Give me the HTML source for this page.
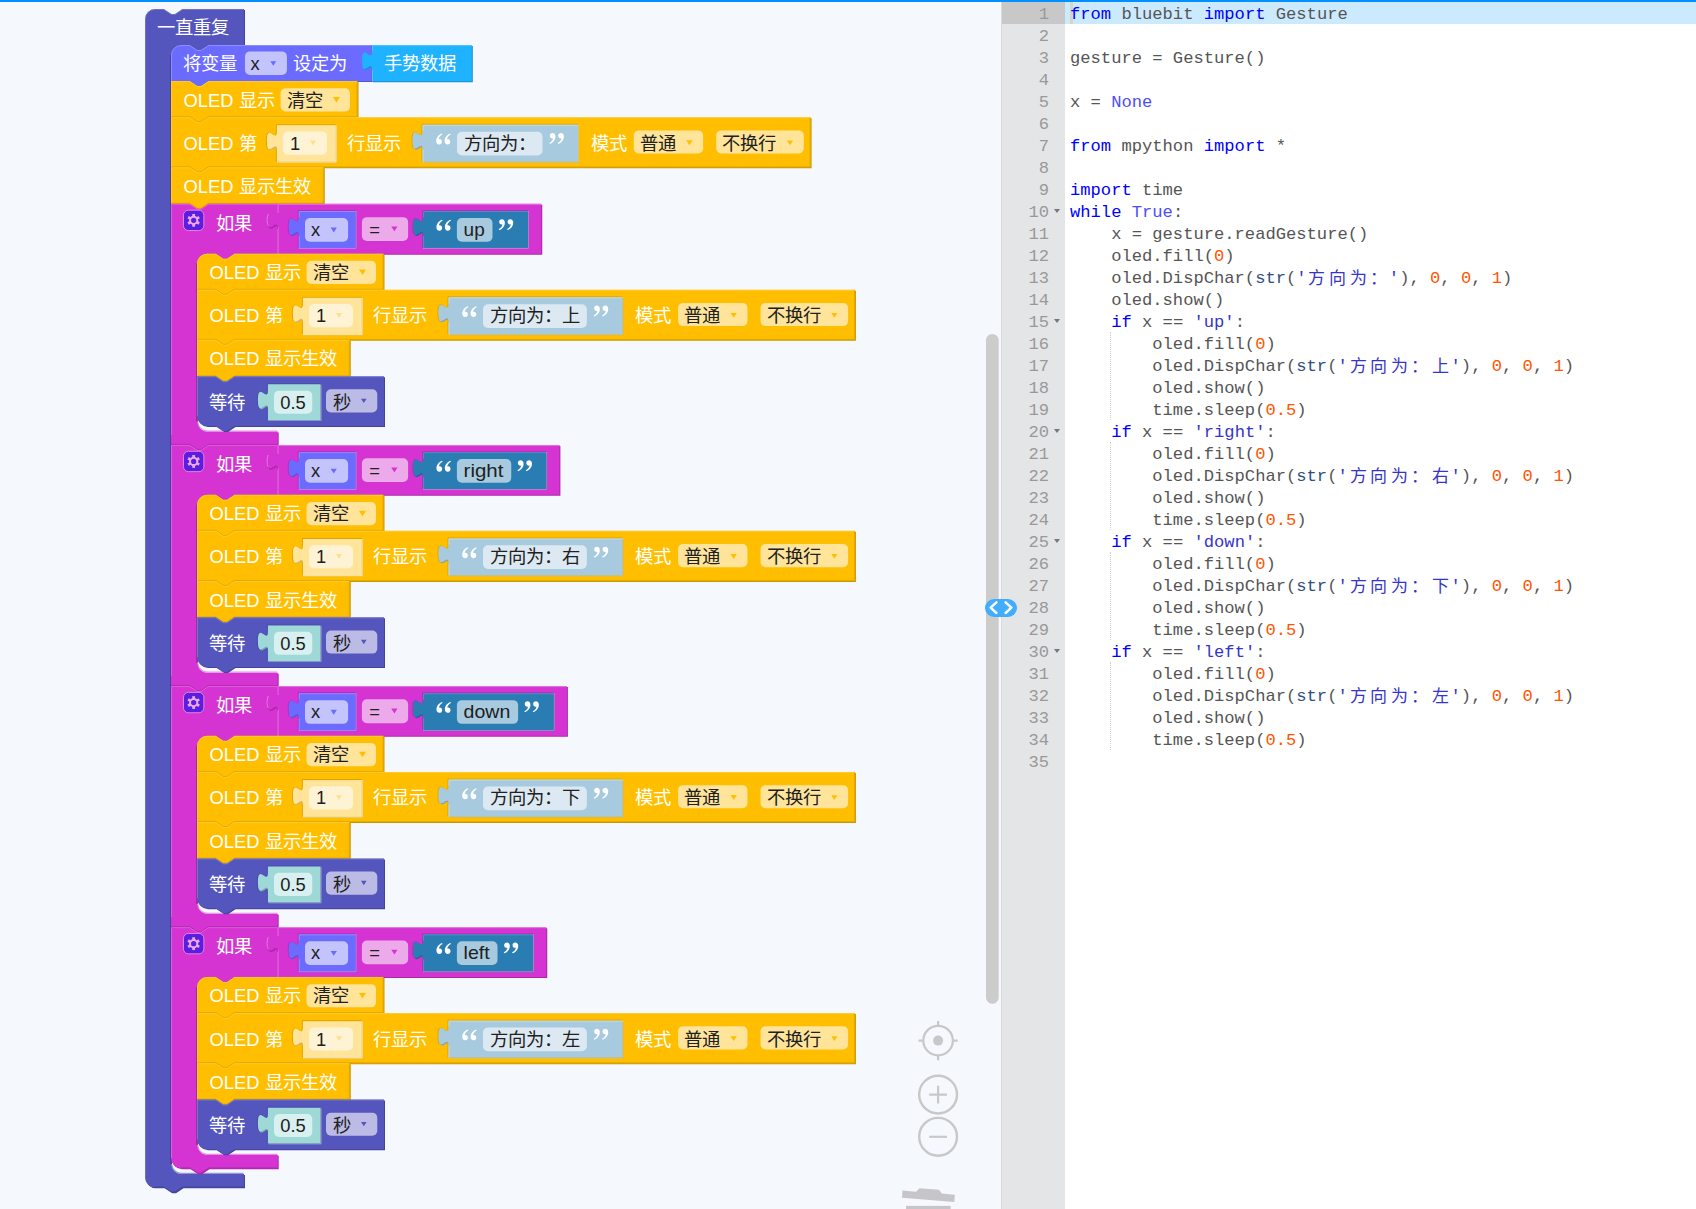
<!DOCTYPE html>
<html lang="zh-CN"><head><meta charset="utf-8">
<style>
html,body{margin:0;padding:0;width:1696px;height:1209px;overflow:hidden;background:#f5f8fd;}
#ws{position:absolute;left:0;top:0;width:1001px;height:1209px;background:#f5f8fd;}
#topbar{position:absolute;left:0;top:0;width:1696px;height:2px;background:#0090ff;z-index:10;}
#gutter{position:absolute;left:1001px;top:0;width:64px;height:1209px;background:#e4e5e7;border-left:1px solid #d8d9db;box-sizing:border-box;}
#code{position:absolute;left:1065px;top:0;width:631px;height:1209px;background:#fff;}
.ln{position:absolute;left:5px;height:22px;line-height:26px;white-space:pre;font-family:"Liberation Mono",monospace;font-size:17.15px;color:#555555;}
.gn{position:absolute;right:16px;width:40px;text-align:right;height:22px;line-height:26px;font-family:"Liberation Mono",monospace;font-size:17.15px;color:#999;}
.cj{display:inline-block;width:20.57px;text-align:center;font-family:"Liberation Serif",serif;font-size:17px;font-weight:300;line-height:26px;vertical-align:top;}
.fold{position:absolute;left:52px;width:0;height:0;border-left:3.5px solid transparent;border-right:3.5px solid transparent;border-top:4px solid #777;}
.guide{position:absolute;left:45px;width:0;border-left:1px dotted #cfcfcf;}
svg text{font-family:"Liberation Sans",sans-serif;}
</style></head><body>
<div id="ws">
<svg width="1001" height="1209" viewBox="0 0 1001 1209" style="position:absolute;left:0;top:0">
<path d="M145,19 A10.0,10.0 0 0 1 155,9 H163.75 l7.5,5.0 3.75,0 7.5,-5.0 H244 V45 H208.5 l-7.5,5.0 -3.75,0 -7.5,-5.0 H181 A10.0,10.0 0 0 0 171,55 V1163.95 A10.0,10.0 0 0 0 181,1173.95 H244 V1187.35 H182.5 l-7.5,5.0 -3.75,0 -7.5,-5.0 H155 A10.0,10.0 0 0 1 145,1177.35 Z" fill="#434498" transform="translate(1,1)"/>
<path d="M145,19 A10.0,10.0 0 0 1 155,9 H163.75 l7.5,5.0 3.75,0 7.5,-5.0 H244 V45 H208.5 l-7.5,5.0 -3.75,0 -7.5,-5.0 H181 A10.0,10.0 0 0 0 171,55 V1163.95 A10.0,10.0 0 0 0 181,1173.95 H244 V1187.35 H182.5 l-7.5,5.0 -3.75,0 -7.5,-5.0 H155 A10.0,10.0 0 0 1 145,1177.35 Z" fill="#5456be"/>
<path d="M145.5,1177.35 V19 A9.5,9.5 0 0 1 155,9.5 H163.75 l7.5,5.0 3.75,0 7.5,-5.0 H243.5" fill="none" stroke="#8a8cd6" stroke-width="1" opacity="0.5"/>
<path d="M170.5,55 V1163.95" stroke="#3a3c85" stroke-width="1" opacity="0.7"/>
<path d="M155,1186.85 H163.75 l7.5,5.0 3.75,0 7.5,-5.0 H243.5" fill="none" stroke="#3f408e" stroke-width="1" opacity="0.6"/>
<path d="M171.5,1163.95 A10.0,10.0 0 0 0 181,1173.45 H243.5" fill="none" stroke="#8a8cd6" stroke-width="1.2" opacity="0.9"/>
<text x="156.5" y="34" font-size="18.33" fill="#fff">一直重复</text>
<path d="M171,55 A10.0,10.0 0 0 1 181,45 H189.75 l7.5,5.0 3.75,0 7.5,-5.0 H371.85 V81.1 H208.5 l-7.5,5.0 -3.75,0 -7.5,-5.0 H171 Z" fill="#5555cc" transform="translate(1,1)"/>
<path d="M171,55 A10.0,10.0 0 0 1 181,45 H189.75 l7.5,5.0 3.75,0 7.5,-5.0 H371.85 V81.1 H208.5 l-7.5,5.0 -3.75,0 -7.5,-5.0 H171 Z" fill="#6b6bff"/>
<path d="M171.5,81.1 V55 A9.5,9.5 0 0 1 181,45.5 H189.75 l7.5,5.0 3.75,0 7.5,-5.0 H371.35" fill="none" stroke="#a3a3ff" stroke-width="1" opacity="0.6"/>
<text x="182.8" y="70.45" font-size="18.33" fill="#fff">将变量</text>
<rect x="245" y="51.4" width="41.9" height="23.5" rx="5" fill="#c4c4fd"/>
<text x="250.6" y="70.45" font-size="18.33" fill="#202020">x</text>
<path d="M270.3,61.18 H276.25 L273.27,65.82 Z" fill="#6b6bff"/>
<text x="292.8" y="70.45" font-size="18.33" fill="#fff">设定为</text>
<path d="M372,45.1 H471.8 V81.2 H372 V70.1 c 0,-12.5 -10,10 -10,-9.375 s 10,3.125 10,-9.375 Z" fill="#188fcc" transform="translate(1,1)"/>
<path d="M372,45.1 H471.8 V81.2 H372 V70.1 c 0,-12.5 -10,10 -10,-9.375 s 10,3.125 10,-9.375 Z" fill="#1fb3ff"/>
<path d="M372.5,81.2 V70.1 M372.5,51.35 V45.6 H471.8" fill="none" stroke="#6fd0ff" stroke-width="1" opacity="0.6"/>
<text x="383.9" y="70.45" font-size="18.33" fill="#fff">手势数据</text>
<path d="M171,81.1 H189.75 l7.5,5.0 3.75,0 7.5,-5.0 H357.5 V117.2 H208.5 l-7.5,5.0 -3.75,0 -7.5,-5.0 H171 Z" fill="#cc9800" transform="translate(1,1)"/>
<path d="M171,81.1 H189.75 l7.5,5.0 3.75,0 7.5,-5.0 H357.5 V117.2 H208.5 l-7.5,5.0 -3.75,0 -7.5,-5.0 H171 Z" fill="#ffbf00"/>
<path d="M171,116.7 H189.75 l7.5,5.0 3.75,0 7.5,-5.0 H357 V81.1" fill="none" stroke="#cc9900" stroke-width="1" opacity="0.55"/>
<path d="M171.5,117.2 V81.6 H189.75 l7.5,5.0 3.75,0 7.5,-5.0 H357" fill="none" stroke="#ffd24d" stroke-width="1" opacity="0.6"/>
<text x="183.6" y="106.55" font-size="18.33" fill="#fff">OLED 显示</text>
<rect x="280.6" y="88.3" width="69.4" height="23.2" rx="5" fill="#ffe49a"/>
<text x="286.9" y="106.55" font-size="18.33" fill="#202020">清空</text>
<path d="M333,97.07 H340 L336.5,102.53 Z" fill="#ffbf00"/>
<path d="M171,117.2 H189.75 l7.5,5.0 3.75,0 7.5,-5.0 H810.6 V167.3 H208.5 l-7.5,5.0 -3.75,0 -7.5,-5.0 H171 Z" fill="#cc9800" transform="translate(1,1)"/>
<path d="M171,117.2 H189.75 l7.5,5.0 3.75,0 7.5,-5.0 H810.6 V167.3 H208.5 l-7.5,5.0 -3.75,0 -7.5,-5.0 H171 Z" fill="#ffbf00"/>
<path d="M171,166.8 H189.75 l7.5,5.0 3.75,0 7.5,-5.0 H810.1 V117.2" fill="none" stroke="#cc9900" stroke-width="1" opacity="0.55"/>
<path d="M171.5,167.3 V117.7 H189.75 l7.5,5.0 3.75,0 7.5,-5.0 H810.1" fill="none" stroke="#ffd24d" stroke-width="1" opacity="0.6"/>
<text x="183.6" y="149.65" font-size="18.33" fill="#fff">OLED 第</text>
<path d="M276.4,161.55 V150.3 c 0,-12.5 -10,10 -10,-9.375 s 10,3.125 10,-9.375 V124.8 H335.6" fill="none" stroke="#cc9900" stroke-width="1" opacity="0.7"/>
<path d="M276.9,125.3 H335.6 V161.55 H276.9 V150.3 c 0,-12.5 -10,10 -10,-9.375 s 10,3.125 10,-9.375 Z" fill="#ccb67b" transform="translate(1,1)"/>
<path d="M276.9,125.3 H335.6 V161.55 H276.9 V150.3 c 0,-12.5 -10,10 -10,-9.375 s 10,3.125 10,-9.375 Z" fill="#ffe49a"/>
<path d="M336.1,125.3 V162.05 H276.9" fill="none" stroke="#fff3cc" stroke-width="1" opacity="0.8"/>
<rect x="283" y="131.55" width="43.9" height="23.15" rx="5" fill="#fff3d6"/>
<text x="290" y="149.65" font-size="18.33" fill="#202020">1</text>
<path d="M310,140.46 H316 L313,145.14 Z" fill="#ffe08a"/>
<text x="346.6" y="149.65" font-size="18.33" fill="#fff">行显示</text>
<path d="M422,161.7 V149.8 c 0,-12.5 -10,10 -10,-9.375 s 10,3.125 10,-9.375 V124.3 H578.1" fill="none" stroke="#cc9900" stroke-width="1" opacity="0.7"/>
<path d="M422.5,124.8 H578.1 V161.7 H422.5 V149.8 c 0,-12.5 -10,10 -10,-9.375 s 10,3.125 10,-9.375 Z" fill="#85a1b2" transform="translate(1,1)"/>
<path d="M422.5,124.8 H578.1 V161.7 H422.5 V149.8 c 0,-12.5 -10,10 -10,-9.375 s 10,3.125 10,-9.375 Z" fill="#a7cadf"/>
<path d="M423,161.7 V149.8 M423,131.05 V125.3 H578.1" fill="none" stroke="#d3e4ef" stroke-width="1" opacity="0.6"/>
<path d="M578.6,124.8 V162.2 H422.5" fill="none" stroke="#ffd24d" stroke-width="1" opacity="0.8"/>
<path transform="translate(436,133)" d="M5.8,0.6 C2.6,1.8 0.2,4.6 0.2,8.0 C0.2,10.2 1.4,11.5 3.1,11.5 C4.7,11.5 5.9,10.4 5.9,8.8 C5.9,7.3 4.9,6.2 3.4,6.1 C3.1,6.1 2.8,6.1 2.6,6.2 C3.0,4.2 4.3,2.6 6.3,1.6 Z" fill="#fff"/><path transform="translate(444.4,133)" d="M5.8,0.6 C2.6,1.8 0.2,4.6 0.2,8.0 C0.2,10.2 1.4,11.5 3.1,11.5 C4.7,11.5 5.9,10.4 5.9,8.8 C5.9,7.3 4.9,6.2 3.4,6.1 C3.1,6.1 2.8,6.1 2.6,6.2 C3.0,4.2 4.3,2.6 6.3,1.6 Z" fill="#fff"/>
<path transform="translate(549.4,133)" d="M0.5,10.9 C3.7,9.7 6.1,6.9 6.1,3.5 C6.1,1.3 4.9,0 3.2,0 C1.6,0 0.4,1.1 0.4,2.7 C0.4,4.2 1.4,5.3 2.9,5.4 C3.2,5.4 3.5,5.4 3.7,5.3 C3.3,7.3 2.0,8.9 0,9.9 Z" fill="#fff"/><path transform="translate(557.8,133)" d="M0.5,10.9 C3.7,9.7 6.1,6.9 6.1,3.5 C6.1,1.3 4.9,0 3.2,0 C1.6,0 0.4,1.1 0.4,2.7 C0.4,4.2 1.4,5.3 2.9,5.4 C3.2,5.4 3.5,5.4 3.7,5.3 C3.3,7.3 2.0,8.9 0,9.9 Z" fill="#fff"/>
<rect x="457" y="131.7" width="85.5" height="23.7" rx="5" fill="#dce9f2"/>
<text x="463.6" y="149.65" font-size="18.33" fill="#202020">方向为：</text>
<text x="590.6" y="149.65" font-size="18.33" fill="#fff">模式</text>
<rect x="633.75" y="130.4" width="69.35" height="23.15" rx="5" fill="#ffe49a"/>
<text x="640.15" y="149.65" font-size="18.33" fill="#202020">普通</text>
<path d="M686.25,140.36 H692.5 L689.38,145.24 Z" fill="#ffbf00"/>
<rect x="716.25" y="130.4" width="87.5" height="23.15" rx="5" fill="#ffe49a"/>
<text x="722.25" y="149.65" font-size="18.33" fill="#202020">不换行</text>
<path d="M787,140.46 H793 L790,145.14 Z" fill="#ffbf00"/>
<path d="M171,167.3 H189.75 l7.5,5.0 3.75,0 7.5,-5.0 H323.75 V203.7 H208.5 l-7.5,5.0 -3.75,0 -7.5,-5.0 H171 Z" fill="#cc9800" transform="translate(1,1)"/>
<path d="M171,167.3 H189.75 l7.5,5.0 3.75,0 7.5,-5.0 H323.75 V203.7 H208.5 l-7.5,5.0 -3.75,0 -7.5,-5.0 H171 Z" fill="#ffbf00"/>
<path d="M171,203.2 H189.75 l7.5,5.0 3.75,0 7.5,-5.0 H323.25 V167.3" fill="none" stroke="#cc9900" stroke-width="1" opacity="0.55"/>
<path d="M171.5,203.7 V167.8 H189.75 l7.5,5.0 3.75,0 7.5,-5.0 H323.25" fill="none" stroke="#ffd24d" stroke-width="1" opacity="0.6"/>
<text x="183.6" y="192.9" font-size="18.33" fill="#fff">OLED 显示生效</text>
<path d="M171,203.85 H189.75 l7.5,5.0 3.75,0 7.5,-5.0 H277.5 V253.65 H234.5 l-7.5,5.0 -3.75,0 -7.5,-5.0 H207 A10.0,10.0 0 0 0 197,263.65 V421.55 A10.0,10.0 0 0 0 207,431.55 H277.7 V444.95 H208.5 l-7.5,5.0 -3.75,0 -7.5,-5.0 H171 Z" fill="#ab28a8" transform="translate(1,1)"/>
<path d="M171,203.85 H189.75 l7.5,5.0 3.75,0 7.5,-5.0 H277.5 V253.65 H234.5 l-7.5,5.0 -3.75,0 -7.5,-5.0 H207 A10.0,10.0 0 0 0 197,263.65 V421.55 A10.0,10.0 0 0 0 207,431.55 H277.7 V444.95 H208.5 l-7.5,5.0 -3.75,0 -7.5,-5.0 H171 Z" fill="#d633d3"/>
<path d="M171.5,434.95 V204.35 H189.75 l7.5,5.0 3.75,0 7.5,-5.0 H277" fill="none" stroke="#e683e4" stroke-width="1" opacity="0.5"/>
<path d="M196.5,263.65 V421.55" stroke="#952393" stroke-width="1" opacity="0.7"/>
<path d="M171,444.45 H189.75 l7.5,5.0 3.75,0 7.5,-5.0 H277.2" fill="none" stroke="#a0269e" stroke-width="1" opacity="0.6"/>
<path d="M197.5,421.55 A10.0,10.0 0 0 0 207,431.05 H277.2" fill="none" stroke="#e683e4" stroke-width="1.2" opacity="0.9"/>
<path d="M277.5,203.85 H541.25 V253.65 H277.5 V228.85 c 0,-12.5 -10,10 -10,-9.375 s 10,3.125 10,-9.375 Z" fill="#ab28a8" transform="translate(1,1)"/>
<path d="M277.5,203.85 H541.25 V253.65 H277.5 V228.85 c 0,-12.5 -10,10 -10,-9.375 s 10,3.125 10,-9.375 Z" fill="#d633d3"/>
<path d="M278,253.65 V226.85 M278,212.85 V204.35 H541.25" fill="none" stroke="#e683e4" stroke-width="1" opacity="0.8"/>
<path d="M277.5,228.85 c 0,-12.5 -10,10 -10,-9.375" fill="none" stroke="#ab29a9" stroke-width="1" opacity="0.8"/>
<path d="M268.3,213.85 c -1.6,3 -1.6,9 0,12" fill="none" stroke="#e683e4" stroke-width="1" opacity="0.9"/>
<rect x="183.45" y="210.15" width="20.4" height="20.4" rx="5" fill="#5a1ee0" stroke="#e683e4" stroke-width="1"/>
<rect x="192.25" y="213.95" width="2.8" height="3.0" transform="rotate(0 193.65 215.45)" fill="#eba8ee"/><rect x="196.49" y="216.4" width="2.8" height="3.0" transform="rotate(60 197.89 217.9)" fill="#eba8ee"/><rect x="196.49" y="221.3" width="2.8" height="3.0" transform="rotate(120 197.89 222.8)" fill="#eba8ee"/><rect x="192.25" y="223.75" width="2.8" height="3.0" transform="rotate(180 193.65 225.25)" fill="#eba8ee"/><rect x="188.01" y="221.3" width="2.8" height="3.0" transform="rotate(240 189.41 222.8)" fill="#eba8ee"/><rect x="188.01" y="216.4" width="2.8" height="3.0" transform="rotate(300 189.41 217.9)" fill="#eba8ee"/>
<circle cx="193.65" cy="220.35" r="3.6" fill="none" stroke="#eba8ee" stroke-width="2.0"/>
<text x="216" y="229.75" font-size="18.33" fill="#fff">如果</text>
<path d="M298.25,247.95 V236.05 c 0,-12.5 -10,10 -10,-9.375 s 10,3.125 10,-9.375 V210.55 H355.6" fill="none" stroke="#ab29a9" stroke-width="1" opacity="0.7"/>
<path d="M298.75,211.05 H355.6 V247.95 H298.75 V236.05 c 0,-12.5 -10,10 -10,-9.375 s 10,3.125 10,-9.375 Z" fill="#5555cc" transform="translate(1,1)"/>
<path d="M298.75,211.05 H355.6 V247.95 H298.75 V236.05 c 0,-12.5 -10,10 -10,-9.375 s 10,3.125 10,-9.375 Z" fill="#6b6bff"/>
<path d="M299.25,247.95 V236.05 M299.25,217.3 V211.55 H355.6" fill="none" stroke="#a3a3ff" stroke-width="1" opacity="0.6"/>
<path d="M356.1,211.05 V248.45 H298.75" fill="none" stroke="#e683e4" stroke-width="1" opacity="0.8"/>
<rect x="305" y="217.95" width="43.1" height="23.7" rx="5" fill="#c4c4fd"/>
<text x="311" y="236.15" font-size="18.33" fill="#202020">x</text>
<path d="M330.6,227.59 H336.9 L333.75,232.51 Z" fill="#6b6bff"/>
<rect x="361.9" y="217.15" width="46.2" height="23.8" rx="5" fill="#ecaaea"/>
<text x="369.3" y="236.15" font-size="18.33" fill="#202020">=</text>
<path d="M391.25,226.41 H397.5 L394.38,231.29 Z" fill="#d633d3"/>
<path d="M422.6,247.95 V236.05 c 0,-12.5 -10,10 -10,-9.375 s 10,3.125 10,-9.375 V210.55 H528.1" fill="none" stroke="#ab29a9" stroke-width="1" opacity="0.7"/>
<path d="M423.1,211.05 H528.1 V247.95 H423.1 V236.05 c 0,-12.5 -10,10 -10,-9.375 s 10,3.125 10,-9.375 Z" fill="#21648f" transform="translate(1,1)"/>
<path d="M423.1,211.05 H528.1 V247.95 H423.1 V236.05 c 0,-12.5 -10,10 -10,-9.375 s 10,3.125 10,-9.375 Z" fill="#2a7db3"/>
<path d="M423.6,247.95 V236.05 M423.6,217.3 V211.55 H528.1" fill="none" stroke="#5fa0cc" stroke-width="1" opacity="0.6"/>
<path d="M528.6,211.05 V248.45 H423.1" fill="none" stroke="#e683e4" stroke-width="1" opacity="0.8"/>
<path transform="translate(436.25,219.15)" d="M5.8,0.6 C2.6,1.8 0.2,4.6 0.2,8.0 C0.2,10.2 1.4,11.5 3.1,11.5 C4.7,11.5 5.9,10.4 5.9,8.8 C5.9,7.3 4.9,6.2 3.4,6.1 C3.1,6.1 2.8,6.1 2.6,6.2 C3.0,4.2 4.3,2.6 6.3,1.6 Z" fill="#fff"/><path transform="translate(444.65,219.15)" d="M5.8,0.6 C2.6,1.8 0.2,4.6 0.2,8.0 C0.2,10.2 1.4,11.5 3.1,11.5 C4.7,11.5 5.9,10.4 5.9,8.8 C5.9,7.3 4.9,6.2 3.4,6.1 C3.1,6.1 2.8,6.1 2.6,6.2 C3.0,4.2 4.3,2.6 6.3,1.6 Z" fill="#fff"/>
<path transform="translate(498.75,219.15)" d="M0.5,10.9 C3.7,9.7 6.1,6.9 6.1,3.5 C6.1,1.3 4.9,0 3.2,0 C1.6,0 0.4,1.1 0.4,2.7 C0.4,4.2 1.4,5.3 2.9,5.4 C3.2,5.4 3.5,5.4 3.7,5.3 C3.3,7.3 2.0,8.9 0,9.9 Z" fill="#fff"/><path transform="translate(507.15,219.15)" d="M0.5,10.9 C3.7,9.7 6.1,6.9 6.1,3.5 C6.1,1.3 4.9,0 3.2,0 C1.6,0 0.4,1.1 0.4,2.7 C0.4,4.2 1.4,5.3 2.9,5.4 C3.2,5.4 3.5,5.4 3.7,5.3 C3.3,7.3 2.0,8.9 0,9.9 Z" fill="#fff"/>
<rect x="456.9" y="217.95" width="35.6" height="23.7" rx="5" fill="#a7cadf"/>
<text x="463.6" y="236.15" font-size="18.33" fill="#202020" textLength="21.1" lengthAdjust="spacingAndGlyphs">up</text>
<path d="M197,263.65 A10.0,10.0 0 0 1 207,253.65 H215.75 l7.5,5.0 3.75,0 7.5,-5.0 H383.5 V289.75 H234.5 l-7.5,5.0 -3.75,0 -7.5,-5.0 H197 Z" fill="#cc9800" transform="translate(1,1)"/>
<path d="M197,263.65 A10.0,10.0 0 0 1 207,253.65 H215.75 l7.5,5.0 3.75,0 7.5,-5.0 H383.5 V289.75 H234.5 l-7.5,5.0 -3.75,0 -7.5,-5.0 H197 Z" fill="#ffbf00"/>
<path d="M197,289.25 H215.75 l7.5,5.0 3.75,0 7.5,-5.0 H383 V253.65" fill="none" stroke="#cc9900" stroke-width="1" opacity="0.55"/>
<path d="M197.5,289.75 V263.65 A9.5,9.5 0 0 1 207,254.15 H215.75 l7.5,5.0 3.75,0 7.5,-5.0 H383" fill="none" stroke="#ffd24d" stroke-width="1" opacity="0.6"/>
<text x="209.6" y="279.1" font-size="18.33" fill="#fff">OLED 显示</text>
<rect x="306.6" y="260.85" width="69.4" height="23.2" rx="5" fill="#ffe49a"/>
<text x="312.9" y="279.1" font-size="18.33" fill="#202020">清空</text>
<path d="M359,269.62 H366 L362.5,275.08 Z" fill="#ffbf00"/>
<path d="M197,289.75 H215.75 l7.5,5.0 3.75,0 7.5,-5.0 H854.93 V339.85 H234.5 l-7.5,5.0 -3.75,0 -7.5,-5.0 H197 Z" fill="#cc9800" transform="translate(1,1)"/>
<path d="M197,289.75 H215.75 l7.5,5.0 3.75,0 7.5,-5.0 H854.93 V339.85 H234.5 l-7.5,5.0 -3.75,0 -7.5,-5.0 H197 Z" fill="#ffbf00"/>
<path d="M197,339.35 H215.75 l7.5,5.0 3.75,0 7.5,-5.0 H854.43 V289.75" fill="none" stroke="#cc9900" stroke-width="1" opacity="0.55"/>
<path d="M197.5,339.85 V290.25 H215.75 l7.5,5.0 3.75,0 7.5,-5.0 H854.43" fill="none" stroke="#ffd24d" stroke-width="1" opacity="0.6"/>
<text x="209.6" y="322.2" font-size="18.33" fill="#fff">OLED 第</text>
<path d="M302.4,334.1 V322.85 c 0,-12.5 -10,10 -10,-9.375 s 10,3.125 10,-9.375 V297.35 H361.6" fill="none" stroke="#cc9900" stroke-width="1" opacity="0.7"/>
<path d="M302.9,297.85 H361.6 V334.1 H302.9 V322.85 c 0,-12.5 -10,10 -10,-9.375 s 10,3.125 10,-9.375 Z" fill="#ccb67b" transform="translate(1,1)"/>
<path d="M302.9,297.85 H361.6 V334.1 H302.9 V322.85 c 0,-12.5 -10,10 -10,-9.375 s 10,3.125 10,-9.375 Z" fill="#ffe49a"/>
<path d="M362.1,297.85 V334.6 H302.9" fill="none" stroke="#fff3cc" stroke-width="1" opacity="0.8"/>
<rect x="309" y="304.1" width="43.9" height="23.15" rx="5" fill="#fff3d6"/>
<text x="316" y="322.2" font-size="18.33" fill="#202020">1</text>
<path d="M336,313.01 H342 L339,317.69 Z" fill="#ffe08a"/>
<text x="372.6" y="322.2" font-size="18.33" fill="#fff">行显示</text>
<path d="M448,334.25 V322.35 c 0,-12.5 -10,10 -10,-9.375 s 10,3.125 10,-9.375 V296.85 H622.43" fill="none" stroke="#cc9900" stroke-width="1" opacity="0.7"/>
<path d="M448.5,297.35 H622.43 V334.25 H448.5 V322.35 c 0,-12.5 -10,10 -10,-9.375 s 10,3.125 10,-9.375 Z" fill="#85a1b2" transform="translate(1,1)"/>
<path d="M448.5,297.35 H622.43 V334.25 H448.5 V322.35 c 0,-12.5 -10,10 -10,-9.375 s 10,3.125 10,-9.375 Z" fill="#a7cadf"/>
<path d="M449,334.25 V322.35 M449,303.6 V297.85 H622.43" fill="none" stroke="#d3e4ef" stroke-width="1" opacity="0.6"/>
<path d="M622.93,297.35 V334.75 H448.5" fill="none" stroke="#ffd24d" stroke-width="1" opacity="0.8"/>
<path transform="translate(462,305.55)" d="M5.8,0.6 C2.6,1.8 0.2,4.6 0.2,8.0 C0.2,10.2 1.4,11.5 3.1,11.5 C4.7,11.5 5.9,10.4 5.9,8.8 C5.9,7.3 4.9,6.2 3.4,6.1 C3.1,6.1 2.8,6.1 2.6,6.2 C3.0,4.2 4.3,2.6 6.3,1.6 Z" fill="#fff"/><path transform="translate(470.4,305.55)" d="M5.8,0.6 C2.6,1.8 0.2,4.6 0.2,8.0 C0.2,10.2 1.4,11.5 3.1,11.5 C4.7,11.5 5.9,10.4 5.9,8.8 C5.9,7.3 4.9,6.2 3.4,6.1 C3.1,6.1 2.8,6.1 2.6,6.2 C3.0,4.2 4.3,2.6 6.3,1.6 Z" fill="#fff"/>
<path transform="translate(593.73,305.55)" d="M0.5,10.9 C3.7,9.7 6.1,6.9 6.1,3.5 C6.1,1.3 4.9,0 3.2,0 C1.6,0 0.4,1.1 0.4,2.7 C0.4,4.2 1.4,5.3 2.9,5.4 C3.2,5.4 3.5,5.4 3.7,5.3 C3.3,7.3 2.0,8.9 0,9.9 Z" fill="#fff"/><path transform="translate(602.13,305.55)" d="M0.5,10.9 C3.7,9.7 6.1,6.9 6.1,3.5 C6.1,1.3 4.9,0 3.2,0 C1.6,0 0.4,1.1 0.4,2.7 C0.4,4.2 1.4,5.3 2.9,5.4 C3.2,5.4 3.5,5.4 3.7,5.3 C3.3,7.3 2.0,8.9 0,9.9 Z" fill="#fff"/>
<rect x="483" y="304.25" width="103.83" height="23.7" rx="5" fill="#dce9f2"/>
<text x="489.6" y="322.2" font-size="18.33" fill="#202020">方向为：上</text>
<text x="634.93" y="322.2" font-size="18.33" fill="#fff">模式</text>
<rect x="678.08" y="302.95" width="69.35" height="23.15" rx="5" fill="#ffe49a"/>
<text x="684.48" y="322.2" font-size="18.33" fill="#202020">普通</text>
<path d="M730.58,312.91 H736.83 L733.71,317.79 Z" fill="#ffbf00"/>
<rect x="760.58" y="302.95" width="87.5" height="23.15" rx="5" fill="#ffe49a"/>
<text x="766.58" y="322.2" font-size="18.33" fill="#202020">不换行</text>
<path d="M831.33,313.01 H837.33 L834.33,317.69 Z" fill="#ffbf00"/>
<path d="M197,339.85 H215.75 l7.5,5.0 3.75,0 7.5,-5.0 H349.75 V376.25 H234.5 l-7.5,5.0 -3.75,0 -7.5,-5.0 H197 Z" fill="#cc9800" transform="translate(1,1)"/>
<path d="M197,339.85 H215.75 l7.5,5.0 3.75,0 7.5,-5.0 H349.75 V376.25 H234.5 l-7.5,5.0 -3.75,0 -7.5,-5.0 H197 Z" fill="#ffbf00"/>
<path d="M197,375.75 H215.75 l7.5,5.0 3.75,0 7.5,-5.0 H349.25 V339.85" fill="none" stroke="#cc9900" stroke-width="1" opacity="0.55"/>
<path d="M197.5,376.25 V340.35 H215.75 l7.5,5.0 3.75,0 7.5,-5.0 H349.25" fill="none" stroke="#ffd24d" stroke-width="1" opacity="0.6"/>
<text x="209.6" y="365.45" font-size="18.33" fill="#fff">OLED 显示生效</text>
<path d="M197,376.25 H215.75 l7.5,5.0 3.75,0 7.5,-5.0 H384 V425.95 H234.5 l-7.5,5.0 -3.75,0 -7.5,-5.0 H207 A10.0,10.0 0 0 1 197,415.95 Z" fill="#434498" transform="translate(1,1)"/>
<path d="M197,376.25 H215.75 l7.5,5.0 3.75,0 7.5,-5.0 H384 V425.95 H234.5 l-7.5,5.0 -3.75,0 -7.5,-5.0 H207 A10.0,10.0 0 0 1 197,415.95 Z" fill="#5456be"/>
<path d="M197.5,415.95 V376.75 H215.75 l7.5,5.0 3.75,0 7.5,-5.0 H383.5" fill="none" stroke="#8a8cd6" stroke-width="1" opacity="0.6"/>
<text x="209" y="408.5" font-size="18.33" fill="#fff">等待</text>
<path d="M267.4,420 V409.35 c 0,-12.5 -10,10 -10,-9.375 s 10,3.125 10,-9.375 V383.85 H320.4" fill="none" stroke="#4345a0" stroke-width="1" opacity="0.7"/>
<path d="M267.9,384.35 H320.4 V420 H267.9 V409.35 c 0,-12.5 -10,10 -10,-9.375 s 10,3.125 10,-9.375 Z" fill="#7fadac" transform="translate(1,1)"/>
<path d="M267.9,384.35 H320.4 V420 H267.9 V409.35 c 0,-12.5 -10,10 -10,-9.375 s 10,3.125 10,-9.375 Z" fill="#9fd9d7"/>
<path d="M320.9,384.35 V420.5 H267.9" fill="none" stroke="#8a8cd6" stroke-width="1" opacity="0.8"/>
<rect x="274" y="390.65" width="38.25" height="23.1" rx="5" fill="#d8f0f0"/>
<text x="280.2" y="408.5" font-size="18.33" fill="#202020">0.5</text>
<rect x="326" y="389.35" width="51.25" height="23.15" rx="5" fill="#bcbbe5"/>
<text x="332.5" y="408.5" font-size="18.33" fill="#202020">秒</text>
<path d="M361,398.67 H366.6 L363.8,403.03 Z" fill="#5456be"/>
<path d="M171,444.95 H189.75 l7.5,5.0 3.75,0 7.5,-5.0 H277.5 V494.75 H234.5 l-7.5,5.0 -3.75,0 -7.5,-5.0 H207 A10.0,10.0 0 0 0 197,504.75 V662.65 A10.0,10.0 0 0 0 207,672.65 H277.7 V686.05 H208.5 l-7.5,5.0 -3.75,0 -7.5,-5.0 H171 Z" fill="#ab28a8" transform="translate(1,1)"/>
<path d="M171,444.95 H189.75 l7.5,5.0 3.75,0 7.5,-5.0 H277.5 V494.75 H234.5 l-7.5,5.0 -3.75,0 -7.5,-5.0 H207 A10.0,10.0 0 0 0 197,504.75 V662.65 A10.0,10.0 0 0 0 207,672.65 H277.7 V686.05 H208.5 l-7.5,5.0 -3.75,0 -7.5,-5.0 H171 Z" fill="#d633d3"/>
<path d="M171.5,676.05 V445.45 H189.75 l7.5,5.0 3.75,0 7.5,-5.0 H277" fill="none" stroke="#e683e4" stroke-width="1" opacity="0.5"/>
<path d="M196.5,504.75 V662.65" stroke="#952393" stroke-width="1" opacity="0.7"/>
<path d="M171,685.55 H189.75 l7.5,5.0 3.75,0 7.5,-5.0 H277.2" fill="none" stroke="#a0269e" stroke-width="1" opacity="0.6"/>
<path d="M197.5,662.65 A10.0,10.0 0 0 0 207,672.15 H277.2" fill="none" stroke="#e683e4" stroke-width="1.2" opacity="0.9"/>
<path d="M277.5,444.95 H559.4 V494.75 H277.5 V469.95 c 0,-12.5 -10,10 -10,-9.375 s 10,3.125 10,-9.375 Z" fill="#ab28a8" transform="translate(1,1)"/>
<path d="M277.5,444.95 H559.4 V494.75 H277.5 V469.95 c 0,-12.5 -10,10 -10,-9.375 s 10,3.125 10,-9.375 Z" fill="#d633d3"/>
<path d="M278,494.75 V467.95 M278,453.95 V445.45 H559.4" fill="none" stroke="#e683e4" stroke-width="1" opacity="0.8"/>
<path d="M277.5,469.95 c 0,-12.5 -10,10 -10,-9.375" fill="none" stroke="#ab29a9" stroke-width="1" opacity="0.8"/>
<path d="M268.3,454.95 c -1.6,3 -1.6,9 0,12" fill="none" stroke="#e683e4" stroke-width="1" opacity="0.9"/>
<rect x="183.45" y="451.25" width="20.4" height="20.4" rx="5" fill="#5a1ee0" stroke="#e683e4" stroke-width="1"/>
<rect x="192.25" y="455.05" width="2.8" height="3.0" transform="rotate(0 193.65 456.55)" fill="#eba8ee"/><rect x="196.49" y="457.5" width="2.8" height="3.0" transform="rotate(60 197.89 459)" fill="#eba8ee"/><rect x="196.49" y="462.4" width="2.8" height="3.0" transform="rotate(120 197.89 463.9)" fill="#eba8ee"/><rect x="192.25" y="464.85" width="2.8" height="3.0" transform="rotate(180 193.65 466.35)" fill="#eba8ee"/><rect x="188.01" y="462.4" width="2.8" height="3.0" transform="rotate(240 189.41 463.9)" fill="#eba8ee"/><rect x="188.01" y="457.5" width="2.8" height="3.0" transform="rotate(300 189.41 459)" fill="#eba8ee"/>
<circle cx="193.65" cy="461.45" r="3.6" fill="none" stroke="#eba8ee" stroke-width="2.0"/>
<text x="216" y="470.85" font-size="18.33" fill="#fff">如果</text>
<path d="M298.25,489.05 V477.15 c 0,-12.5 -10,10 -10,-9.375 s 10,3.125 10,-9.375 V451.65 H355.6" fill="none" stroke="#ab29a9" stroke-width="1" opacity="0.7"/>
<path d="M298.75,452.15 H355.6 V489.05 H298.75 V477.15 c 0,-12.5 -10,10 -10,-9.375 s 10,3.125 10,-9.375 Z" fill="#5555cc" transform="translate(1,1)"/>
<path d="M298.75,452.15 H355.6 V489.05 H298.75 V477.15 c 0,-12.5 -10,10 -10,-9.375 s 10,3.125 10,-9.375 Z" fill="#6b6bff"/>
<path d="M299.25,489.05 V477.15 M299.25,458.4 V452.65 H355.6" fill="none" stroke="#a3a3ff" stroke-width="1" opacity="0.6"/>
<path d="M356.1,452.15 V489.55 H298.75" fill="none" stroke="#e683e4" stroke-width="1" opacity="0.8"/>
<rect x="305" y="459.05" width="43.1" height="23.7" rx="5" fill="#c4c4fd"/>
<text x="311" y="477.25" font-size="18.33" fill="#202020">x</text>
<path d="M330.6,468.69 H336.9 L333.75,473.61 Z" fill="#6b6bff"/>
<rect x="361.9" y="458.25" width="46.2" height="23.8" rx="5" fill="#ecaaea"/>
<text x="369.3" y="477.25" font-size="18.33" fill="#202020">=</text>
<path d="M391.25,467.51 H397.5 L394.38,472.39 Z" fill="#d633d3"/>
<path d="M422.6,489.05 V477.15 c 0,-12.5 -10,10 -10,-9.375 s 10,3.125 10,-9.375 V451.65 H546.25" fill="none" stroke="#ab29a9" stroke-width="1" opacity="0.7"/>
<path d="M423.1,452.15 H546.25 V489.05 H423.1 V477.15 c 0,-12.5 -10,10 -10,-9.375 s 10,3.125 10,-9.375 Z" fill="#21648f" transform="translate(1,1)"/>
<path d="M423.1,452.15 H546.25 V489.05 H423.1 V477.15 c 0,-12.5 -10,10 -10,-9.375 s 10,3.125 10,-9.375 Z" fill="#2a7db3"/>
<path d="M423.6,489.05 V477.15 M423.6,458.4 V452.65 H546.25" fill="none" stroke="#5fa0cc" stroke-width="1" opacity="0.6"/>
<path d="M546.75,452.15 V489.55 H423.1" fill="none" stroke="#e683e4" stroke-width="1" opacity="0.8"/>
<path transform="translate(436.25,460.25)" d="M5.8,0.6 C2.6,1.8 0.2,4.6 0.2,8.0 C0.2,10.2 1.4,11.5 3.1,11.5 C4.7,11.5 5.9,10.4 5.9,8.8 C5.9,7.3 4.9,6.2 3.4,6.1 C3.1,6.1 2.8,6.1 2.6,6.2 C3.0,4.2 4.3,2.6 6.3,1.6 Z" fill="#fff"/><path transform="translate(444.65,460.25)" d="M5.8,0.6 C2.6,1.8 0.2,4.6 0.2,8.0 C0.2,10.2 1.4,11.5 3.1,11.5 C4.7,11.5 5.9,10.4 5.9,8.8 C5.9,7.3 4.9,6.2 3.4,6.1 C3.1,6.1 2.8,6.1 2.6,6.2 C3.0,4.2 4.3,2.6 6.3,1.6 Z" fill="#fff"/>
<path transform="translate(517.5,460.25)" d="M0.5,10.9 C3.7,9.7 6.1,6.9 6.1,3.5 C6.1,1.3 4.9,0 3.2,0 C1.6,0 0.4,1.1 0.4,2.7 C0.4,4.2 1.4,5.3 2.9,5.4 C3.2,5.4 3.5,5.4 3.7,5.3 C3.3,7.3 2.0,8.9 0,9.9 Z" fill="#fff"/><path transform="translate(525.9,460.25)" d="M0.5,10.9 C3.7,9.7 6.1,6.9 6.1,3.5 C6.1,1.3 4.9,0 3.2,0 C1.6,0 0.4,1.1 0.4,2.7 C0.4,4.2 1.4,5.3 2.9,5.4 C3.2,5.4 3.5,5.4 3.7,5.3 C3.3,7.3 2.0,8.9 0,9.9 Z" fill="#fff"/>
<rect x="456.9" y="459.05" width="54.35" height="23.7" rx="5" fill="#a7cadf"/>
<text x="463.6" y="477.25" font-size="18.33" fill="#202020" textLength="39.85" lengthAdjust="spacingAndGlyphs">right</text>
<path d="M197,504.75 A10.0,10.0 0 0 1 207,494.75 H215.75 l7.5,5.0 3.75,0 7.5,-5.0 H383.5 V530.85 H234.5 l-7.5,5.0 -3.75,0 -7.5,-5.0 H197 Z" fill="#cc9800" transform="translate(1,1)"/>
<path d="M197,504.75 A10.0,10.0 0 0 1 207,494.75 H215.75 l7.5,5.0 3.75,0 7.5,-5.0 H383.5 V530.85 H234.5 l-7.5,5.0 -3.75,0 -7.5,-5.0 H197 Z" fill="#ffbf00"/>
<path d="M197,530.35 H215.75 l7.5,5.0 3.75,0 7.5,-5.0 H383 V494.75" fill="none" stroke="#cc9900" stroke-width="1" opacity="0.55"/>
<path d="M197.5,530.85 V504.75 A9.5,9.5 0 0 1 207,495.25 H215.75 l7.5,5.0 3.75,0 7.5,-5.0 H383" fill="none" stroke="#ffd24d" stroke-width="1" opacity="0.6"/>
<text x="209.6" y="520.2" font-size="18.33" fill="#fff">OLED 显示</text>
<rect x="306.6" y="501.95" width="69.4" height="23.2" rx="5" fill="#ffe49a"/>
<text x="312.9" y="520.2" font-size="18.33" fill="#202020">清空</text>
<path d="M359,510.72 H366 L362.5,516.18 Z" fill="#ffbf00"/>
<path d="M197,530.85 H215.75 l7.5,5.0 3.75,0 7.5,-5.0 H854.93 V580.95 H234.5 l-7.5,5.0 -3.75,0 -7.5,-5.0 H197 Z" fill="#cc9800" transform="translate(1,1)"/>
<path d="M197,530.85 H215.75 l7.5,5.0 3.75,0 7.5,-5.0 H854.93 V580.95 H234.5 l-7.5,5.0 -3.75,0 -7.5,-5.0 H197 Z" fill="#ffbf00"/>
<path d="M197,580.45 H215.75 l7.5,5.0 3.75,0 7.5,-5.0 H854.43 V530.85" fill="none" stroke="#cc9900" stroke-width="1" opacity="0.55"/>
<path d="M197.5,580.95 V531.35 H215.75 l7.5,5.0 3.75,0 7.5,-5.0 H854.43" fill="none" stroke="#ffd24d" stroke-width="1" opacity="0.6"/>
<text x="209.6" y="563.3" font-size="18.33" fill="#fff">OLED 第</text>
<path d="M302.4,575.2 V563.95 c 0,-12.5 -10,10 -10,-9.375 s 10,3.125 10,-9.375 V538.45 H361.6" fill="none" stroke="#cc9900" stroke-width="1" opacity="0.7"/>
<path d="M302.9,538.95 H361.6 V575.2 H302.9 V563.95 c 0,-12.5 -10,10 -10,-9.375 s 10,3.125 10,-9.375 Z" fill="#ccb67b" transform="translate(1,1)"/>
<path d="M302.9,538.95 H361.6 V575.2 H302.9 V563.95 c 0,-12.5 -10,10 -10,-9.375 s 10,3.125 10,-9.375 Z" fill="#ffe49a"/>
<path d="M362.1,538.95 V575.7 H302.9" fill="none" stroke="#fff3cc" stroke-width="1" opacity="0.8"/>
<rect x="309" y="545.2" width="43.9" height="23.15" rx="5" fill="#fff3d6"/>
<text x="316" y="563.3" font-size="18.33" fill="#202020">1</text>
<path d="M336,554.11 H342 L339,558.79 Z" fill="#ffe08a"/>
<text x="372.6" y="563.3" font-size="18.33" fill="#fff">行显示</text>
<path d="M448,575.35 V563.45 c 0,-12.5 -10,10 -10,-9.375 s 10,3.125 10,-9.375 V537.95 H622.43" fill="none" stroke="#cc9900" stroke-width="1" opacity="0.7"/>
<path d="M448.5,538.45 H622.43 V575.35 H448.5 V563.45 c 0,-12.5 -10,10 -10,-9.375 s 10,3.125 10,-9.375 Z" fill="#85a1b2" transform="translate(1,1)"/>
<path d="M448.5,538.45 H622.43 V575.35 H448.5 V563.45 c 0,-12.5 -10,10 -10,-9.375 s 10,3.125 10,-9.375 Z" fill="#a7cadf"/>
<path d="M449,575.35 V563.45 M449,544.7 V538.95 H622.43" fill="none" stroke="#d3e4ef" stroke-width="1" opacity="0.6"/>
<path d="M622.93,538.45 V575.85 H448.5" fill="none" stroke="#ffd24d" stroke-width="1" opacity="0.8"/>
<path transform="translate(462,546.65)" d="M5.8,0.6 C2.6,1.8 0.2,4.6 0.2,8.0 C0.2,10.2 1.4,11.5 3.1,11.5 C4.7,11.5 5.9,10.4 5.9,8.8 C5.9,7.3 4.9,6.2 3.4,6.1 C3.1,6.1 2.8,6.1 2.6,6.2 C3.0,4.2 4.3,2.6 6.3,1.6 Z" fill="#fff"/><path transform="translate(470.4,546.65)" d="M5.8,0.6 C2.6,1.8 0.2,4.6 0.2,8.0 C0.2,10.2 1.4,11.5 3.1,11.5 C4.7,11.5 5.9,10.4 5.9,8.8 C5.9,7.3 4.9,6.2 3.4,6.1 C3.1,6.1 2.8,6.1 2.6,6.2 C3.0,4.2 4.3,2.6 6.3,1.6 Z" fill="#fff"/>
<path transform="translate(593.73,546.65)" d="M0.5,10.9 C3.7,9.7 6.1,6.9 6.1,3.5 C6.1,1.3 4.9,0 3.2,0 C1.6,0 0.4,1.1 0.4,2.7 C0.4,4.2 1.4,5.3 2.9,5.4 C3.2,5.4 3.5,5.4 3.7,5.3 C3.3,7.3 2.0,8.9 0,9.9 Z" fill="#fff"/><path transform="translate(602.13,546.65)" d="M0.5,10.9 C3.7,9.7 6.1,6.9 6.1,3.5 C6.1,1.3 4.9,0 3.2,0 C1.6,0 0.4,1.1 0.4,2.7 C0.4,4.2 1.4,5.3 2.9,5.4 C3.2,5.4 3.5,5.4 3.7,5.3 C3.3,7.3 2.0,8.9 0,9.9 Z" fill="#fff"/>
<rect x="483" y="545.35" width="103.83" height="23.7" rx="5" fill="#dce9f2"/>
<text x="489.6" y="563.3" font-size="18.33" fill="#202020">方向为：右</text>
<text x="634.93" y="563.3" font-size="18.33" fill="#fff">模式</text>
<rect x="678.08" y="544.05" width="69.35" height="23.15" rx="5" fill="#ffe49a"/>
<text x="684.48" y="563.3" font-size="18.33" fill="#202020">普通</text>
<path d="M730.58,554.01 H736.83 L733.71,558.89 Z" fill="#ffbf00"/>
<rect x="760.58" y="544.05" width="87.5" height="23.15" rx="5" fill="#ffe49a"/>
<text x="766.58" y="563.3" font-size="18.33" fill="#202020">不换行</text>
<path d="M831.33,554.11 H837.33 L834.33,558.79 Z" fill="#ffbf00"/>
<path d="M197,580.95 H215.75 l7.5,5.0 3.75,0 7.5,-5.0 H349.75 V617.35 H234.5 l-7.5,5.0 -3.75,0 -7.5,-5.0 H197 Z" fill="#cc9800" transform="translate(1,1)"/>
<path d="M197,580.95 H215.75 l7.5,5.0 3.75,0 7.5,-5.0 H349.75 V617.35 H234.5 l-7.5,5.0 -3.75,0 -7.5,-5.0 H197 Z" fill="#ffbf00"/>
<path d="M197,616.85 H215.75 l7.5,5.0 3.75,0 7.5,-5.0 H349.25 V580.95" fill="none" stroke="#cc9900" stroke-width="1" opacity="0.55"/>
<path d="M197.5,617.35 V581.45 H215.75 l7.5,5.0 3.75,0 7.5,-5.0 H349.25" fill="none" stroke="#ffd24d" stroke-width="1" opacity="0.6"/>
<text x="209.6" y="606.55" font-size="18.33" fill="#fff">OLED 显示生效</text>
<path d="M197,617.35 H215.75 l7.5,5.0 3.75,0 7.5,-5.0 H384 V667.05 H234.5 l-7.5,5.0 -3.75,0 -7.5,-5.0 H207 A10.0,10.0 0 0 1 197,657.05 Z" fill="#434498" transform="translate(1,1)"/>
<path d="M197,617.35 H215.75 l7.5,5.0 3.75,0 7.5,-5.0 H384 V667.05 H234.5 l-7.5,5.0 -3.75,0 -7.5,-5.0 H207 A10.0,10.0 0 0 1 197,657.05 Z" fill="#5456be"/>
<path d="M197.5,657.05 V617.85 H215.75 l7.5,5.0 3.75,0 7.5,-5.0 H383.5" fill="none" stroke="#8a8cd6" stroke-width="1" opacity="0.6"/>
<text x="209" y="649.6" font-size="18.33" fill="#fff">等待</text>
<path d="M267.4,661.1 V650.45 c 0,-12.5 -10,10 -10,-9.375 s 10,3.125 10,-9.375 V624.95 H320.4" fill="none" stroke="#4345a0" stroke-width="1" opacity="0.7"/>
<path d="M267.9,625.45 H320.4 V661.1 H267.9 V650.45 c 0,-12.5 -10,10 -10,-9.375 s 10,3.125 10,-9.375 Z" fill="#7fadac" transform="translate(1,1)"/>
<path d="M267.9,625.45 H320.4 V661.1 H267.9 V650.45 c 0,-12.5 -10,10 -10,-9.375 s 10,3.125 10,-9.375 Z" fill="#9fd9d7"/>
<path d="M320.9,625.45 V661.6 H267.9" fill="none" stroke="#8a8cd6" stroke-width="1" opacity="0.8"/>
<rect x="274" y="631.75" width="38.25" height="23.1" rx="5" fill="#d8f0f0"/>
<text x="280.2" y="649.6" font-size="18.33" fill="#202020">0.5</text>
<rect x="326" y="630.45" width="51.25" height="23.15" rx="5" fill="#bcbbe5"/>
<text x="332.5" y="649.6" font-size="18.33" fill="#202020">秒</text>
<path d="M361,639.77 H366.6 L363.8,644.13 Z" fill="#5456be"/>
<path d="M171,686.05 H189.75 l7.5,5.0 3.75,0 7.5,-5.0 H277.5 V735.85 H234.5 l-7.5,5.0 -3.75,0 -7.5,-5.0 H207 A10.0,10.0 0 0 0 197,745.85 V903.75 A10.0,10.0 0 0 0 207,913.75 H277.7 V927.15 H208.5 l-7.5,5.0 -3.75,0 -7.5,-5.0 H171 Z" fill="#ab28a8" transform="translate(1,1)"/>
<path d="M171,686.05 H189.75 l7.5,5.0 3.75,0 7.5,-5.0 H277.5 V735.85 H234.5 l-7.5,5.0 -3.75,0 -7.5,-5.0 H207 A10.0,10.0 0 0 0 197,745.85 V903.75 A10.0,10.0 0 0 0 207,913.75 H277.7 V927.15 H208.5 l-7.5,5.0 -3.75,0 -7.5,-5.0 H171 Z" fill="#d633d3"/>
<path d="M171.5,917.15 V686.55 H189.75 l7.5,5.0 3.75,0 7.5,-5.0 H277" fill="none" stroke="#e683e4" stroke-width="1" opacity="0.5"/>
<path d="M196.5,745.85 V903.75" stroke="#952393" stroke-width="1" opacity="0.7"/>
<path d="M171,926.65 H189.75 l7.5,5.0 3.75,0 7.5,-5.0 H277.2" fill="none" stroke="#a0269e" stroke-width="1" opacity="0.6"/>
<path d="M197.5,903.75 A10.0,10.0 0 0 0 207,913.25 H277.2" fill="none" stroke="#e683e4" stroke-width="1.2" opacity="0.9"/>
<path d="M277.5,686.05 H566.9 V735.85 H277.5 V711.05 c 0,-12.5 -10,10 -10,-9.375 s 10,3.125 10,-9.375 Z" fill="#ab28a8" transform="translate(1,1)"/>
<path d="M277.5,686.05 H566.9 V735.85 H277.5 V711.05 c 0,-12.5 -10,10 -10,-9.375 s 10,3.125 10,-9.375 Z" fill="#d633d3"/>
<path d="M278,735.85 V709.05 M278,695.05 V686.55 H566.9" fill="none" stroke="#e683e4" stroke-width="1" opacity="0.8"/>
<path d="M277.5,711.05 c 0,-12.5 -10,10 -10,-9.375" fill="none" stroke="#ab29a9" stroke-width="1" opacity="0.8"/>
<path d="M268.3,696.05 c -1.6,3 -1.6,9 0,12" fill="none" stroke="#e683e4" stroke-width="1" opacity="0.9"/>
<rect x="183.45" y="692.35" width="20.4" height="20.4" rx="5" fill="#5a1ee0" stroke="#e683e4" stroke-width="1"/>
<rect x="192.25" y="696.15" width="2.8" height="3.0" transform="rotate(0 193.65 697.65)" fill="#eba8ee"/><rect x="196.49" y="698.6" width="2.8" height="3.0" transform="rotate(60 197.89 700.1)" fill="#eba8ee"/><rect x="196.49" y="703.5" width="2.8" height="3.0" transform="rotate(120 197.89 705)" fill="#eba8ee"/><rect x="192.25" y="705.95" width="2.8" height="3.0" transform="rotate(180 193.65 707.45)" fill="#eba8ee"/><rect x="188.01" y="703.5" width="2.8" height="3.0" transform="rotate(240 189.41 705)" fill="#eba8ee"/><rect x="188.01" y="698.6" width="2.8" height="3.0" transform="rotate(300 189.41 700.1)" fill="#eba8ee"/>
<circle cx="193.65" cy="702.55" r="3.6" fill="none" stroke="#eba8ee" stroke-width="2.0"/>
<text x="216" y="711.95" font-size="18.33" fill="#fff">如果</text>
<path d="M298.25,730.15 V718.25 c 0,-12.5 -10,10 -10,-9.375 s 10,3.125 10,-9.375 V692.75 H355.6" fill="none" stroke="#ab29a9" stroke-width="1" opacity="0.7"/>
<path d="M298.75,693.25 H355.6 V730.15 H298.75 V718.25 c 0,-12.5 -10,10 -10,-9.375 s 10,3.125 10,-9.375 Z" fill="#5555cc" transform="translate(1,1)"/>
<path d="M298.75,693.25 H355.6 V730.15 H298.75 V718.25 c 0,-12.5 -10,10 -10,-9.375 s 10,3.125 10,-9.375 Z" fill="#6b6bff"/>
<path d="M299.25,730.15 V718.25 M299.25,699.5 V693.75 H355.6" fill="none" stroke="#a3a3ff" stroke-width="1" opacity="0.6"/>
<path d="M356.1,693.25 V730.65 H298.75" fill="none" stroke="#e683e4" stroke-width="1" opacity="0.8"/>
<rect x="305" y="700.15" width="43.1" height="23.7" rx="5" fill="#c4c4fd"/>
<text x="311" y="718.35" font-size="18.33" fill="#202020">x</text>
<path d="M330.6,709.79 H336.9 L333.75,714.71 Z" fill="#6b6bff"/>
<rect x="361.9" y="699.35" width="46.2" height="23.8" rx="5" fill="#ecaaea"/>
<text x="369.3" y="718.35" font-size="18.33" fill="#202020">=</text>
<path d="M391.25,708.61 H397.5 L394.38,713.49 Z" fill="#d633d3"/>
<path d="M422.6,730.15 V718.25 c 0,-12.5 -10,10 -10,-9.375 s 10,3.125 10,-9.375 V692.75 H553.75" fill="none" stroke="#ab29a9" stroke-width="1" opacity="0.7"/>
<path d="M423.1,693.25 H553.75 V730.15 H423.1 V718.25 c 0,-12.5 -10,10 -10,-9.375 s 10,3.125 10,-9.375 Z" fill="#21648f" transform="translate(1,1)"/>
<path d="M423.1,693.25 H553.75 V730.15 H423.1 V718.25 c 0,-12.5 -10,10 -10,-9.375 s 10,3.125 10,-9.375 Z" fill="#2a7db3"/>
<path d="M423.6,730.15 V718.25 M423.6,699.5 V693.75 H553.75" fill="none" stroke="#5fa0cc" stroke-width="1" opacity="0.6"/>
<path d="M554.25,693.25 V730.65 H423.1" fill="none" stroke="#e683e4" stroke-width="1" opacity="0.8"/>
<path transform="translate(436.25,701.35)" d="M5.8,0.6 C2.6,1.8 0.2,4.6 0.2,8.0 C0.2,10.2 1.4,11.5 3.1,11.5 C4.7,11.5 5.9,10.4 5.9,8.8 C5.9,7.3 4.9,6.2 3.4,6.1 C3.1,6.1 2.8,6.1 2.6,6.2 C3.0,4.2 4.3,2.6 6.3,1.6 Z" fill="#fff"/><path transform="translate(444.65,701.35)" d="M5.8,0.6 C2.6,1.8 0.2,4.6 0.2,8.0 C0.2,10.2 1.4,11.5 3.1,11.5 C4.7,11.5 5.9,10.4 5.9,8.8 C5.9,7.3 4.9,6.2 3.4,6.1 C3.1,6.1 2.8,6.1 2.6,6.2 C3.0,4.2 4.3,2.6 6.3,1.6 Z" fill="#fff"/>
<path transform="translate(524.35,701.35)" d="M0.5,10.9 C3.7,9.7 6.1,6.9 6.1,3.5 C6.1,1.3 4.9,0 3.2,0 C1.6,0 0.4,1.1 0.4,2.7 C0.4,4.2 1.4,5.3 2.9,5.4 C3.2,5.4 3.5,5.4 3.7,5.3 C3.3,7.3 2.0,8.9 0,9.9 Z" fill="#fff"/><path transform="translate(532.75,701.35)" d="M0.5,10.9 C3.7,9.7 6.1,6.9 6.1,3.5 C6.1,1.3 4.9,0 3.2,0 C1.6,0 0.4,1.1 0.4,2.7 C0.4,4.2 1.4,5.3 2.9,5.4 C3.2,5.4 3.5,5.4 3.7,5.3 C3.3,7.3 2.0,8.9 0,9.9 Z" fill="#fff"/>
<rect x="456.9" y="700.15" width="61.2" height="23.7" rx="5" fill="#a7cadf"/>
<text x="463.6" y="718.35" font-size="18.33" fill="#202020" textLength="46.7" lengthAdjust="spacingAndGlyphs">down</text>
<path d="M197,745.85 A10.0,10.0 0 0 1 207,735.85 H215.75 l7.5,5.0 3.75,0 7.5,-5.0 H383.5 V771.95 H234.5 l-7.5,5.0 -3.75,0 -7.5,-5.0 H197 Z" fill="#cc9800" transform="translate(1,1)"/>
<path d="M197,745.85 A10.0,10.0 0 0 1 207,735.85 H215.75 l7.5,5.0 3.75,0 7.5,-5.0 H383.5 V771.95 H234.5 l-7.5,5.0 -3.75,0 -7.5,-5.0 H197 Z" fill="#ffbf00"/>
<path d="M197,771.45 H215.75 l7.5,5.0 3.75,0 7.5,-5.0 H383 V735.85" fill="none" stroke="#cc9900" stroke-width="1" opacity="0.55"/>
<path d="M197.5,771.95 V745.85 A9.5,9.5 0 0 1 207,736.35 H215.75 l7.5,5.0 3.75,0 7.5,-5.0 H383" fill="none" stroke="#ffd24d" stroke-width="1" opacity="0.6"/>
<text x="209.6" y="761.3" font-size="18.33" fill="#fff">OLED 显示</text>
<rect x="306.6" y="743.05" width="69.4" height="23.2" rx="5" fill="#ffe49a"/>
<text x="312.9" y="761.3" font-size="18.33" fill="#202020">清空</text>
<path d="M359,751.82 H366 L362.5,757.28 Z" fill="#ffbf00"/>
<path d="M197,771.95 H215.75 l7.5,5.0 3.75,0 7.5,-5.0 H854.93 V822.05 H234.5 l-7.5,5.0 -3.75,0 -7.5,-5.0 H197 Z" fill="#cc9800" transform="translate(1,1)"/>
<path d="M197,771.95 H215.75 l7.5,5.0 3.75,0 7.5,-5.0 H854.93 V822.05 H234.5 l-7.5,5.0 -3.75,0 -7.5,-5.0 H197 Z" fill="#ffbf00"/>
<path d="M197,821.55 H215.75 l7.5,5.0 3.75,0 7.5,-5.0 H854.43 V771.95" fill="none" stroke="#cc9900" stroke-width="1" opacity="0.55"/>
<path d="M197.5,822.05 V772.45 H215.75 l7.5,5.0 3.75,0 7.5,-5.0 H854.43" fill="none" stroke="#ffd24d" stroke-width="1" opacity="0.6"/>
<text x="209.6" y="804.4" font-size="18.33" fill="#fff">OLED 第</text>
<path d="M302.4,816.3 V805.05 c 0,-12.5 -10,10 -10,-9.375 s 10,3.125 10,-9.375 V779.55 H361.6" fill="none" stroke="#cc9900" stroke-width="1" opacity="0.7"/>
<path d="M302.9,780.05 H361.6 V816.3 H302.9 V805.05 c 0,-12.5 -10,10 -10,-9.375 s 10,3.125 10,-9.375 Z" fill="#ccb67b" transform="translate(1,1)"/>
<path d="M302.9,780.05 H361.6 V816.3 H302.9 V805.05 c 0,-12.5 -10,10 -10,-9.375 s 10,3.125 10,-9.375 Z" fill="#ffe49a"/>
<path d="M362.1,780.05 V816.8 H302.9" fill="none" stroke="#fff3cc" stroke-width="1" opacity="0.8"/>
<rect x="309" y="786.3" width="43.9" height="23.15" rx="5" fill="#fff3d6"/>
<text x="316" y="804.4" font-size="18.33" fill="#202020">1</text>
<path d="M336,795.21 H342 L339,799.89 Z" fill="#ffe08a"/>
<text x="372.6" y="804.4" font-size="18.33" fill="#fff">行显示</text>
<path d="M448,816.45 V804.55 c 0,-12.5 -10,10 -10,-9.375 s 10,3.125 10,-9.375 V779.05 H622.43" fill="none" stroke="#cc9900" stroke-width="1" opacity="0.7"/>
<path d="M448.5,779.55 H622.43 V816.45 H448.5 V804.55 c 0,-12.5 -10,10 -10,-9.375 s 10,3.125 10,-9.375 Z" fill="#85a1b2" transform="translate(1,1)"/>
<path d="M448.5,779.55 H622.43 V816.45 H448.5 V804.55 c 0,-12.5 -10,10 -10,-9.375 s 10,3.125 10,-9.375 Z" fill="#a7cadf"/>
<path d="M449,816.45 V804.55 M449,785.8 V780.05 H622.43" fill="none" stroke="#d3e4ef" stroke-width="1" opacity="0.6"/>
<path d="M622.93,779.55 V816.95 H448.5" fill="none" stroke="#ffd24d" stroke-width="1" opacity="0.8"/>
<path transform="translate(462,787.75)" d="M5.8,0.6 C2.6,1.8 0.2,4.6 0.2,8.0 C0.2,10.2 1.4,11.5 3.1,11.5 C4.7,11.5 5.9,10.4 5.9,8.8 C5.9,7.3 4.9,6.2 3.4,6.1 C3.1,6.1 2.8,6.1 2.6,6.2 C3.0,4.2 4.3,2.6 6.3,1.6 Z" fill="#fff"/><path transform="translate(470.4,787.75)" d="M5.8,0.6 C2.6,1.8 0.2,4.6 0.2,8.0 C0.2,10.2 1.4,11.5 3.1,11.5 C4.7,11.5 5.9,10.4 5.9,8.8 C5.9,7.3 4.9,6.2 3.4,6.1 C3.1,6.1 2.8,6.1 2.6,6.2 C3.0,4.2 4.3,2.6 6.3,1.6 Z" fill="#fff"/>
<path transform="translate(593.73,787.75)" d="M0.5,10.9 C3.7,9.7 6.1,6.9 6.1,3.5 C6.1,1.3 4.9,0 3.2,0 C1.6,0 0.4,1.1 0.4,2.7 C0.4,4.2 1.4,5.3 2.9,5.4 C3.2,5.4 3.5,5.4 3.7,5.3 C3.3,7.3 2.0,8.9 0,9.9 Z" fill="#fff"/><path transform="translate(602.13,787.75)" d="M0.5,10.9 C3.7,9.7 6.1,6.9 6.1,3.5 C6.1,1.3 4.9,0 3.2,0 C1.6,0 0.4,1.1 0.4,2.7 C0.4,4.2 1.4,5.3 2.9,5.4 C3.2,5.4 3.5,5.4 3.7,5.3 C3.3,7.3 2.0,8.9 0,9.9 Z" fill="#fff"/>
<rect x="483" y="786.45" width="103.83" height="23.7" rx="5" fill="#dce9f2"/>
<text x="489.6" y="804.4" font-size="18.33" fill="#202020">方向为：下</text>
<text x="634.93" y="804.4" font-size="18.33" fill="#fff">模式</text>
<rect x="678.08" y="785.15" width="69.35" height="23.15" rx="5" fill="#ffe49a"/>
<text x="684.48" y="804.4" font-size="18.33" fill="#202020">普通</text>
<path d="M730.58,795.11 H736.83 L733.71,799.99 Z" fill="#ffbf00"/>
<rect x="760.58" y="785.15" width="87.5" height="23.15" rx="5" fill="#ffe49a"/>
<text x="766.58" y="804.4" font-size="18.33" fill="#202020">不换行</text>
<path d="M831.33,795.21 H837.33 L834.33,799.89 Z" fill="#ffbf00"/>
<path d="M197,822.05 H215.75 l7.5,5.0 3.75,0 7.5,-5.0 H349.75 V858.45 H234.5 l-7.5,5.0 -3.75,0 -7.5,-5.0 H197 Z" fill="#cc9800" transform="translate(1,1)"/>
<path d="M197,822.05 H215.75 l7.5,5.0 3.75,0 7.5,-5.0 H349.75 V858.45 H234.5 l-7.5,5.0 -3.75,0 -7.5,-5.0 H197 Z" fill="#ffbf00"/>
<path d="M197,857.95 H215.75 l7.5,5.0 3.75,0 7.5,-5.0 H349.25 V822.05" fill="none" stroke="#cc9900" stroke-width="1" opacity="0.55"/>
<path d="M197.5,858.45 V822.55 H215.75 l7.5,5.0 3.75,0 7.5,-5.0 H349.25" fill="none" stroke="#ffd24d" stroke-width="1" opacity="0.6"/>
<text x="209.6" y="847.65" font-size="18.33" fill="#fff">OLED 显示生效</text>
<path d="M197,858.45 H215.75 l7.5,5.0 3.75,0 7.5,-5.0 H384 V908.15 H234.5 l-7.5,5.0 -3.75,0 -7.5,-5.0 H207 A10.0,10.0 0 0 1 197,898.15 Z" fill="#434498" transform="translate(1,1)"/>
<path d="M197,858.45 H215.75 l7.5,5.0 3.75,0 7.5,-5.0 H384 V908.15 H234.5 l-7.5,5.0 -3.75,0 -7.5,-5.0 H207 A10.0,10.0 0 0 1 197,898.15 Z" fill="#5456be"/>
<path d="M197.5,898.15 V858.95 H215.75 l7.5,5.0 3.75,0 7.5,-5.0 H383.5" fill="none" stroke="#8a8cd6" stroke-width="1" opacity="0.6"/>
<text x="209" y="890.7" font-size="18.33" fill="#fff">等待</text>
<path d="M267.4,902.2 V891.55 c 0,-12.5 -10,10 -10,-9.375 s 10,3.125 10,-9.375 V866.05 H320.4" fill="none" stroke="#4345a0" stroke-width="1" opacity="0.7"/>
<path d="M267.9,866.55 H320.4 V902.2 H267.9 V891.55 c 0,-12.5 -10,10 -10,-9.375 s 10,3.125 10,-9.375 Z" fill="#7fadac" transform="translate(1,1)"/>
<path d="M267.9,866.55 H320.4 V902.2 H267.9 V891.55 c 0,-12.5 -10,10 -10,-9.375 s 10,3.125 10,-9.375 Z" fill="#9fd9d7"/>
<path d="M320.9,866.55 V902.7 H267.9" fill="none" stroke="#8a8cd6" stroke-width="1" opacity="0.8"/>
<rect x="274" y="872.85" width="38.25" height="23.1" rx="5" fill="#d8f0f0"/>
<text x="280.2" y="890.7" font-size="18.33" fill="#202020">0.5</text>
<rect x="326" y="871.55" width="51.25" height="23.15" rx="5" fill="#bcbbe5"/>
<text x="332.5" y="890.7" font-size="18.33" fill="#202020">秒</text>
<path d="M361,880.87 H366.6 L363.8,885.23 Z" fill="#5456be"/>
<path d="M171,927.15 H189.75 l7.5,5.0 3.75,0 7.5,-5.0 H277.5 V976.95 H234.5 l-7.5,5.0 -3.75,0 -7.5,-5.0 H207 A10.0,10.0 0 0 0 197,986.95 V1144.85 A10.0,10.0 0 0 0 207,1154.85 H277.7 V1168.25 H208.5 l-7.5,5.0 -3.75,0 -7.5,-5.0 H181 A10.0,10.0 0 0 1 171,1158.25 Z" fill="#ab28a8" transform="translate(1,1)"/>
<path d="M171,927.15 H189.75 l7.5,5.0 3.75,0 7.5,-5.0 H277.5 V976.95 H234.5 l-7.5,5.0 -3.75,0 -7.5,-5.0 H207 A10.0,10.0 0 0 0 197,986.95 V1144.85 A10.0,10.0 0 0 0 207,1154.85 H277.7 V1168.25 H208.5 l-7.5,5.0 -3.75,0 -7.5,-5.0 H181 A10.0,10.0 0 0 1 171,1158.25 Z" fill="#d633d3"/>
<path d="M171.5,1158.25 V927.65 H189.75 l7.5,5.0 3.75,0 7.5,-5.0 H277" fill="none" stroke="#e683e4" stroke-width="1" opacity="0.5"/>
<path d="M196.5,986.95 V1144.85" stroke="#952393" stroke-width="1" opacity="0.7"/>
<path d="M181,1167.75 H189.75 l7.5,5.0 3.75,0 7.5,-5.0 H277.2" fill="none" stroke="#a0269e" stroke-width="1" opacity="0.6"/>
<path d="M197.5,1144.85 A10.0,10.0 0 0 0 207,1154.35 H277.2" fill="none" stroke="#e683e4" stroke-width="1.2" opacity="0.9"/>
<path d="M277.5,927.15 H546.25 V976.95 H277.5 V952.15 c 0,-12.5 -10,10 -10,-9.375 s 10,3.125 10,-9.375 Z" fill="#ab28a8" transform="translate(1,1)"/>
<path d="M277.5,927.15 H546.25 V976.95 H277.5 V952.15 c 0,-12.5 -10,10 -10,-9.375 s 10,3.125 10,-9.375 Z" fill="#d633d3"/>
<path d="M278,976.95 V950.15 M278,936.15 V927.65 H546.25" fill="none" stroke="#e683e4" stroke-width="1" opacity="0.8"/>
<path d="M277.5,952.15 c 0,-12.5 -10,10 -10,-9.375" fill="none" stroke="#ab29a9" stroke-width="1" opacity="0.8"/>
<path d="M268.3,937.15 c -1.6,3 -1.6,9 0,12" fill="none" stroke="#e683e4" stroke-width="1" opacity="0.9"/>
<rect x="183.45" y="933.45" width="20.4" height="20.4" rx="5" fill="#5a1ee0" stroke="#e683e4" stroke-width="1"/>
<rect x="192.25" y="937.25" width="2.8" height="3.0" transform="rotate(0 193.65 938.75)" fill="#eba8ee"/><rect x="196.49" y="939.7" width="2.8" height="3.0" transform="rotate(60 197.89 941.2)" fill="#eba8ee"/><rect x="196.49" y="944.6" width="2.8" height="3.0" transform="rotate(120 197.89 946.1)" fill="#eba8ee"/><rect x="192.25" y="947.05" width="2.8" height="3.0" transform="rotate(180 193.65 948.55)" fill="#eba8ee"/><rect x="188.01" y="944.6" width="2.8" height="3.0" transform="rotate(240 189.41 946.1)" fill="#eba8ee"/><rect x="188.01" y="939.7" width="2.8" height="3.0" transform="rotate(300 189.41 941.2)" fill="#eba8ee"/>
<circle cx="193.65" cy="943.65" r="3.6" fill="none" stroke="#eba8ee" stroke-width="2.0"/>
<text x="216" y="953.05" font-size="18.33" fill="#fff">如果</text>
<path d="M298.25,971.25 V959.35 c 0,-12.5 -10,10 -10,-9.375 s 10,3.125 10,-9.375 V933.85 H355.6" fill="none" stroke="#ab29a9" stroke-width="1" opacity="0.7"/>
<path d="M298.75,934.35 H355.6 V971.25 H298.75 V959.35 c 0,-12.5 -10,10 -10,-9.375 s 10,3.125 10,-9.375 Z" fill="#5555cc" transform="translate(1,1)"/>
<path d="M298.75,934.35 H355.6 V971.25 H298.75 V959.35 c 0,-12.5 -10,10 -10,-9.375 s 10,3.125 10,-9.375 Z" fill="#6b6bff"/>
<path d="M299.25,971.25 V959.35 M299.25,940.6 V934.85 H355.6" fill="none" stroke="#a3a3ff" stroke-width="1" opacity="0.6"/>
<path d="M356.1,934.35 V971.75 H298.75" fill="none" stroke="#e683e4" stroke-width="1" opacity="0.8"/>
<rect x="305" y="941.25" width="43.1" height="23.7" rx="5" fill="#c4c4fd"/>
<text x="311" y="959.45" font-size="18.33" fill="#202020">x</text>
<path d="M330.6,950.89 H336.9 L333.75,955.81 Z" fill="#6b6bff"/>
<rect x="361.9" y="940.45" width="46.2" height="23.8" rx="5" fill="#ecaaea"/>
<text x="369.3" y="959.45" font-size="18.33" fill="#202020">=</text>
<path d="M391.25,949.71 H397.5 L394.38,954.59 Z" fill="#d633d3"/>
<path d="M422.6,971.25 V959.35 c 0,-12.5 -10,10 -10,-9.375 s 10,3.125 10,-9.375 V933.85 H533.1" fill="none" stroke="#ab29a9" stroke-width="1" opacity="0.7"/>
<path d="M423.1,934.35 H533.1 V971.25 H423.1 V959.35 c 0,-12.5 -10,10 -10,-9.375 s 10,3.125 10,-9.375 Z" fill="#21648f" transform="translate(1,1)"/>
<path d="M423.1,934.35 H533.1 V971.25 H423.1 V959.35 c 0,-12.5 -10,10 -10,-9.375 s 10,3.125 10,-9.375 Z" fill="#2a7db3"/>
<path d="M423.6,971.25 V959.35 M423.6,940.6 V934.85 H533.1" fill="none" stroke="#5fa0cc" stroke-width="1" opacity="0.6"/>
<path d="M533.6,934.35 V971.75 H423.1" fill="none" stroke="#e683e4" stroke-width="1" opacity="0.8"/>
<path transform="translate(436.25,942.45)" d="M5.8,0.6 C2.6,1.8 0.2,4.6 0.2,8.0 C0.2,10.2 1.4,11.5 3.1,11.5 C4.7,11.5 5.9,10.4 5.9,8.8 C5.9,7.3 4.9,6.2 3.4,6.1 C3.1,6.1 2.8,6.1 2.6,6.2 C3.0,4.2 4.3,2.6 6.3,1.6 Z" fill="#fff"/><path transform="translate(444.65,942.45)" d="M5.8,0.6 C2.6,1.8 0.2,4.6 0.2,8.0 C0.2,10.2 1.4,11.5 3.1,11.5 C4.7,11.5 5.9,10.4 5.9,8.8 C5.9,7.3 4.9,6.2 3.4,6.1 C3.1,6.1 2.8,6.1 2.6,6.2 C3.0,4.2 4.3,2.6 6.3,1.6 Z" fill="#fff"/>
<path transform="translate(503.75,942.45)" d="M0.5,10.9 C3.7,9.7 6.1,6.9 6.1,3.5 C6.1,1.3 4.9,0 3.2,0 C1.6,0 0.4,1.1 0.4,2.7 C0.4,4.2 1.4,5.3 2.9,5.4 C3.2,5.4 3.5,5.4 3.7,5.3 C3.3,7.3 2.0,8.9 0,9.9 Z" fill="#fff"/><path transform="translate(512.15,942.45)" d="M0.5,10.9 C3.7,9.7 6.1,6.9 6.1,3.5 C6.1,1.3 4.9,0 3.2,0 C1.6,0 0.4,1.1 0.4,2.7 C0.4,4.2 1.4,5.3 2.9,5.4 C3.2,5.4 3.5,5.4 3.7,5.3 C3.3,7.3 2.0,8.9 0,9.9 Z" fill="#fff"/>
<rect x="456.9" y="941.25" width="40.6" height="23.7" rx="5" fill="#a7cadf"/>
<text x="463.6" y="959.45" font-size="18.33" fill="#202020" textLength="26.1" lengthAdjust="spacingAndGlyphs">left</text>
<path d="M197,986.95 A10.0,10.0 0 0 1 207,976.95 H215.75 l7.5,5.0 3.75,0 7.5,-5.0 H383.5 V1013.05 H234.5 l-7.5,5.0 -3.75,0 -7.5,-5.0 H197 Z" fill="#cc9800" transform="translate(1,1)"/>
<path d="M197,986.95 A10.0,10.0 0 0 1 207,976.95 H215.75 l7.5,5.0 3.75,0 7.5,-5.0 H383.5 V1013.05 H234.5 l-7.5,5.0 -3.75,0 -7.5,-5.0 H197 Z" fill="#ffbf00"/>
<path d="M197,1012.55 H215.75 l7.5,5.0 3.75,0 7.5,-5.0 H383 V976.95" fill="none" stroke="#cc9900" stroke-width="1" opacity="0.55"/>
<path d="M197.5,1013.05 V986.95 A9.5,9.5 0 0 1 207,977.45 H215.75 l7.5,5.0 3.75,0 7.5,-5.0 H383" fill="none" stroke="#ffd24d" stroke-width="1" opacity="0.6"/>
<text x="209.6" y="1002.4" font-size="18.33" fill="#fff">OLED 显示</text>
<rect x="306.6" y="984.15" width="69.4" height="23.2" rx="5" fill="#ffe49a"/>
<text x="312.9" y="1002.4" font-size="18.33" fill="#202020">清空</text>
<path d="M359,992.92 H366 L362.5,998.38 Z" fill="#ffbf00"/>
<path d="M197,1013.05 H215.75 l7.5,5.0 3.75,0 7.5,-5.0 H854.93 V1063.15 H234.5 l-7.5,5.0 -3.75,0 -7.5,-5.0 H197 Z" fill="#cc9800" transform="translate(1,1)"/>
<path d="M197,1013.05 H215.75 l7.5,5.0 3.75,0 7.5,-5.0 H854.93 V1063.15 H234.5 l-7.5,5.0 -3.75,0 -7.5,-5.0 H197 Z" fill="#ffbf00"/>
<path d="M197,1062.65 H215.75 l7.5,5.0 3.75,0 7.5,-5.0 H854.43 V1013.05" fill="none" stroke="#cc9900" stroke-width="1" opacity="0.55"/>
<path d="M197.5,1063.15 V1013.55 H215.75 l7.5,5.0 3.75,0 7.5,-5.0 H854.43" fill="none" stroke="#ffd24d" stroke-width="1" opacity="0.6"/>
<text x="209.6" y="1045.5" font-size="18.33" fill="#fff">OLED 第</text>
<path d="M302.4,1057.4 V1046.15 c 0,-12.5 -10,10 -10,-9.375 s 10,3.125 10,-9.375 V1020.65 H361.6" fill="none" stroke="#cc9900" stroke-width="1" opacity="0.7"/>
<path d="M302.9,1021.15 H361.6 V1057.4 H302.9 V1046.15 c 0,-12.5 -10,10 -10,-9.375 s 10,3.125 10,-9.375 Z" fill="#ccb67b" transform="translate(1,1)"/>
<path d="M302.9,1021.15 H361.6 V1057.4 H302.9 V1046.15 c 0,-12.5 -10,10 -10,-9.375 s 10,3.125 10,-9.375 Z" fill="#ffe49a"/>
<path d="M362.1,1021.15 V1057.9 H302.9" fill="none" stroke="#fff3cc" stroke-width="1" opacity="0.8"/>
<rect x="309" y="1027.4" width="43.9" height="23.15" rx="5" fill="#fff3d6"/>
<text x="316" y="1045.5" font-size="18.33" fill="#202020">1</text>
<path d="M336,1036.31 H342 L339,1040.99 Z" fill="#ffe08a"/>
<text x="372.6" y="1045.5" font-size="18.33" fill="#fff">行显示</text>
<path d="M448,1057.55 V1045.65 c 0,-12.5 -10,10 -10,-9.375 s 10,3.125 10,-9.375 V1020.15 H622.43" fill="none" stroke="#cc9900" stroke-width="1" opacity="0.7"/>
<path d="M448.5,1020.65 H622.43 V1057.55 H448.5 V1045.65 c 0,-12.5 -10,10 -10,-9.375 s 10,3.125 10,-9.375 Z" fill="#85a1b2" transform="translate(1,1)"/>
<path d="M448.5,1020.65 H622.43 V1057.55 H448.5 V1045.65 c 0,-12.5 -10,10 -10,-9.375 s 10,3.125 10,-9.375 Z" fill="#a7cadf"/>
<path d="M449,1057.55 V1045.65 M449,1026.9 V1021.15 H622.43" fill="none" stroke="#d3e4ef" stroke-width="1" opacity="0.6"/>
<path d="M622.93,1020.65 V1058.05 H448.5" fill="none" stroke="#ffd24d" stroke-width="1" opacity="0.8"/>
<path transform="translate(462,1028.85)" d="M5.8,0.6 C2.6,1.8 0.2,4.6 0.2,8.0 C0.2,10.2 1.4,11.5 3.1,11.5 C4.7,11.5 5.9,10.4 5.9,8.8 C5.9,7.3 4.9,6.2 3.4,6.1 C3.1,6.1 2.8,6.1 2.6,6.2 C3.0,4.2 4.3,2.6 6.3,1.6 Z" fill="#fff"/><path transform="translate(470.4,1028.85)" d="M5.8,0.6 C2.6,1.8 0.2,4.6 0.2,8.0 C0.2,10.2 1.4,11.5 3.1,11.5 C4.7,11.5 5.9,10.4 5.9,8.8 C5.9,7.3 4.9,6.2 3.4,6.1 C3.1,6.1 2.8,6.1 2.6,6.2 C3.0,4.2 4.3,2.6 6.3,1.6 Z" fill="#fff"/>
<path transform="translate(593.73,1028.85)" d="M0.5,10.9 C3.7,9.7 6.1,6.9 6.1,3.5 C6.1,1.3 4.9,0 3.2,0 C1.6,0 0.4,1.1 0.4,2.7 C0.4,4.2 1.4,5.3 2.9,5.4 C3.2,5.4 3.5,5.4 3.7,5.3 C3.3,7.3 2.0,8.9 0,9.9 Z" fill="#fff"/><path transform="translate(602.13,1028.85)" d="M0.5,10.9 C3.7,9.7 6.1,6.9 6.1,3.5 C6.1,1.3 4.9,0 3.2,0 C1.6,0 0.4,1.1 0.4,2.7 C0.4,4.2 1.4,5.3 2.9,5.4 C3.2,5.4 3.5,5.4 3.7,5.3 C3.3,7.3 2.0,8.9 0,9.9 Z" fill="#fff"/>
<rect x="483" y="1027.55" width="103.83" height="23.7" rx="5" fill="#dce9f2"/>
<text x="489.6" y="1045.5" font-size="18.33" fill="#202020">方向为：左</text>
<text x="634.93" y="1045.5" font-size="18.33" fill="#fff">模式</text>
<rect x="678.08" y="1026.25" width="69.35" height="23.15" rx="5" fill="#ffe49a"/>
<text x="684.48" y="1045.5" font-size="18.33" fill="#202020">普通</text>
<path d="M730.58,1036.21 H736.83 L733.71,1041.09 Z" fill="#ffbf00"/>
<rect x="760.58" y="1026.25" width="87.5" height="23.15" rx="5" fill="#ffe49a"/>
<text x="766.58" y="1045.5" font-size="18.33" fill="#202020">不换行</text>
<path d="M831.33,1036.31 H837.33 L834.33,1040.99 Z" fill="#ffbf00"/>
<path d="M197,1063.15 H215.75 l7.5,5.0 3.75,0 7.5,-5.0 H349.75 V1099.55 H234.5 l-7.5,5.0 -3.75,0 -7.5,-5.0 H197 Z" fill="#cc9800" transform="translate(1,1)"/>
<path d="M197,1063.15 H215.75 l7.5,5.0 3.75,0 7.5,-5.0 H349.75 V1099.55 H234.5 l-7.5,5.0 -3.75,0 -7.5,-5.0 H197 Z" fill="#ffbf00"/>
<path d="M197,1099.05 H215.75 l7.5,5.0 3.75,0 7.5,-5.0 H349.25 V1063.15" fill="none" stroke="#cc9900" stroke-width="1" opacity="0.55"/>
<path d="M197.5,1099.55 V1063.65 H215.75 l7.5,5.0 3.75,0 7.5,-5.0 H349.25" fill="none" stroke="#ffd24d" stroke-width="1" opacity="0.6"/>
<text x="209.6" y="1088.75" font-size="18.33" fill="#fff">OLED 显示生效</text>
<path d="M197,1099.55 H215.75 l7.5,5.0 3.75,0 7.5,-5.0 H384 V1149.25 H234.5 l-7.5,5.0 -3.75,0 -7.5,-5.0 H207 A10.0,10.0 0 0 1 197,1139.25 Z" fill="#434498" transform="translate(1,1)"/>
<path d="M197,1099.55 H215.75 l7.5,5.0 3.75,0 7.5,-5.0 H384 V1149.25 H234.5 l-7.5,5.0 -3.75,0 -7.5,-5.0 H207 A10.0,10.0 0 0 1 197,1139.25 Z" fill="#5456be"/>
<path d="M197.5,1139.25 V1100.05 H215.75 l7.5,5.0 3.75,0 7.5,-5.0 H383.5" fill="none" stroke="#8a8cd6" stroke-width="1" opacity="0.6"/>
<text x="209" y="1131.8" font-size="18.33" fill="#fff">等待</text>
<path d="M267.4,1143.3 V1132.65 c 0,-12.5 -10,10 -10,-9.375 s 10,3.125 10,-9.375 V1107.15 H320.4" fill="none" stroke="#4345a0" stroke-width="1" opacity="0.7"/>
<path d="M267.9,1107.65 H320.4 V1143.3 H267.9 V1132.65 c 0,-12.5 -10,10 -10,-9.375 s 10,3.125 10,-9.375 Z" fill="#7fadac" transform="translate(1,1)"/>
<path d="M267.9,1107.65 H320.4 V1143.3 H267.9 V1132.65 c 0,-12.5 -10,10 -10,-9.375 s 10,3.125 10,-9.375 Z" fill="#9fd9d7"/>
<path d="M320.9,1107.65 V1143.8 H267.9" fill="none" stroke="#8a8cd6" stroke-width="1" opacity="0.8"/>
<rect x="274" y="1113.95" width="38.25" height="23.1" rx="5" fill="#d8f0f0"/>
<text x="280.2" y="1131.8" font-size="18.33" fill="#202020">0.5</text>
<rect x="326" y="1112.65" width="51.25" height="23.15" rx="5" fill="#bcbbe5"/>
<text x="332.5" y="1131.8" font-size="18.33" fill="#202020">秒</text>
<path d="M361,1121.97 H366.6 L363.8,1126.33 Z" fill="#5456be"/>
<!-- scrollbar -->
<rect x="986" y="334" width="12.7" height="669.8" rx="6.35" fill="#cccccc"/>
<!-- zoom controls -->
<g fill="none" stroke="#c8c8c8">
<circle cx="938.1" cy="1040.6" r="14.8" stroke-width="2.2"/>
<path d="M938.1,1021 V1026.5 M938.1,1054.7 V1060.2 M918.5,1040.6 H924 M952.2,1040.6 H957.7" stroke-width="2.2"/>
<circle cx="938.1" cy="1094.6" r="18.9" stroke-width="2.4"/>
<path d="M929.2,1094.6 H947 M938.1,1085.7 V1103.5" stroke-width="2.2"/>
<circle cx="938.1" cy="1136.8" r="18.9" stroke-width="2.4"/>
<path d="M929.2,1136.8 H947" stroke-width="2.2"/>
</g>
<circle cx="938.1" cy="1040.6" r="5" fill="#c8c8c8"/>
<!-- trash lid -->
<path d="M902.4,1190.6 L916,1191.8 L919.5,1188.2 L939,1189.8 L941.8,1193.4 L954.8,1194.8 L954.3,1202 L902,1197.8 Z" fill="#c6c6ca"/>
<rect x="906" y="1205.9" width="44.7" height="4" fill="#c6c6ca"/>
</svg>
<div style="position:absolute;left:985px;top:599px;width:32px;height:18px;border-radius:9px;background:#42adff;z-index:5">
<svg width="32" height="18" style="position:absolute;left:0;top:0"><path d="M11.4,3.3 L5.6,8.7 L11.4,14 M20.6,3.3 L26.4,8.7 L20.6,14" fill="none" stroke="#fff" stroke-width="2.4" stroke-linecap="round" stroke-linejoin="round"/></svg>
</div>
</div>
<div id="gutter">
<div style="position:absolute;left:0;top:2px;width:64px;height:22px;background:#c8c8c8"></div>
<div class="gn" style="top:2px">1</div><div class="gn" style="top:24px">2</div><div class="gn" style="top:46px">3</div><div class="gn" style="top:68px">4</div><div class="gn" style="top:90px">5</div><div class="gn" style="top:112px">6</div><div class="gn" style="top:134px">7</div><div class="gn" style="top:156px">8</div><div class="gn" style="top:178px">9</div><div class="gn" style="top:200px">10</div><div class="fold" style="top:209px"></div><div class="gn" style="top:222px">11</div><div class="gn" style="top:244px">12</div><div class="gn" style="top:266px">13</div><div class="gn" style="top:288px">14</div><div class="gn" style="top:310px">15</div><div class="fold" style="top:319px"></div><div class="gn" style="top:332px">16</div><div class="gn" style="top:354px">17</div><div class="gn" style="top:376px">18</div><div class="gn" style="top:398px">19</div><div class="gn" style="top:420px">20</div><div class="fold" style="top:429px"></div><div class="gn" style="top:442px">21</div><div class="gn" style="top:464px">22</div><div class="gn" style="top:486px">23</div><div class="gn" style="top:508px">24</div><div class="gn" style="top:530px">25</div><div class="fold" style="top:539px"></div><div class="gn" style="top:552px">26</div><div class="gn" style="top:574px">27</div><div class="gn" style="top:596px">28</div><div class="gn" style="top:618px">29</div><div class="gn" style="top:640px">30</div><div class="fold" style="top:649px"></div><div class="gn" style="top:662px">31</div><div class="gn" style="top:684px">32</div><div class="gn" style="top:706px">33</div><div class="gn" style="top:728px">34</div><div class="gn" style="top:750px">35</div>
</div>
<div id="code">
<div style="position:absolute;left:0;top:2px;width:631px;height:22px;background:#cceafd"></div>
<div style="position:absolute;left:5px;top:2px;width:2.5px;height:22px;background:#d4d8c0"></div>
<div class="guide" style="top:332px;height:88px"></div><div class="guide" style="top:442px;height:88px"></div><div class="guide" style="top:552px;height:88px"></div><div class="guide" style="top:662px;height:88px"></div>
<div class="ln" style="top:2px"><span style="color:#0000ff">from</span> bluebit <span style="color:#0000ff">import</span> Gesture</div><div class="ln" style="top:24px"></div><div class="ln" style="top:46px">gesture = Gesture()</div><div class="ln" style="top:68px"></div><div class="ln" style="top:90px">x = <span style="color:#4d4dff">None</span></div><div class="ln" style="top:112px"></div><div class="ln" style="top:134px"><span style="color:#0000ff">from</span> mpython <span style="color:#0000ff">import</span> *</div><div class="ln" style="top:156px"></div><div class="ln" style="top:178px"><span style="color:#0000ff">import</span> time</div><div class="ln" style="top:200px"><span style="color:#0000ff">while</span> <span style="color:#4d4dff">True</span>:</div><div class="ln" style="top:222px">    x = gesture.readGesture()</div><div class="ln" style="top:244px">    oled.fill(<span style="color:#ff5500">0</span>)</div><div class="ln" style="top:266px">    oled.DispChar(<span style="color:#2f4f80">str</span>(<span style="color:#3535c8">'</span><span class="cj" style="color:#3535c8">方</span><span class="cj" style="color:#3535c8">向</span><span class="cj" style="color:#3535c8">为</span><span class="cj" style="color:#3535c8">：</span><span style="color:#3535c8">'</span>), <span style="color:#ff5500">0</span>, <span style="color:#ff5500">0</span>, <span style="color:#ff5500">1</span>)</div><div class="ln" style="top:288px">    oled.show()</div><div class="ln" style="top:310px">    <span style="color:#0000ff">if</span> x == <span style="color:#3535c8">'</span><span style="color:#3535c8">u</span><span style="color:#3535c8">p</span><span style="color:#3535c8">'</span>:</div><div class="ln" style="top:332px">        oled.fill(<span style="color:#ff5500">0</span>)</div><div class="ln" style="top:354px">        oled.DispChar(<span style="color:#2f4f80">str</span>(<span style="color:#3535c8">'</span><span class="cj" style="color:#3535c8">方</span><span class="cj" style="color:#3535c8">向</span><span class="cj" style="color:#3535c8">为</span><span class="cj" style="color:#3535c8">：</span><span class="cj" style="color:#3535c8">上</span><span style="color:#3535c8">'</span>), <span style="color:#ff5500">0</span>, <span style="color:#ff5500">0</span>, <span style="color:#ff5500">1</span>)</div><div class="ln" style="top:376px">        oled.show()</div><div class="ln" style="top:398px">        time.sleep(<span style="color:#ff5500">0.5</span>)</div><div class="ln" style="top:420px">    <span style="color:#0000ff">if</span> x == <span style="color:#3535c8">'</span><span style="color:#3535c8">r</span><span style="color:#3535c8">i</span><span style="color:#3535c8">g</span><span style="color:#3535c8">h</span><span style="color:#3535c8">t</span><span style="color:#3535c8">'</span>:</div><div class="ln" style="top:442px">        oled.fill(<span style="color:#ff5500">0</span>)</div><div class="ln" style="top:464px">        oled.DispChar(<span style="color:#2f4f80">str</span>(<span style="color:#3535c8">'</span><span class="cj" style="color:#3535c8">方</span><span class="cj" style="color:#3535c8">向</span><span class="cj" style="color:#3535c8">为</span><span class="cj" style="color:#3535c8">：</span><span class="cj" style="color:#3535c8">右</span><span style="color:#3535c8">'</span>), <span style="color:#ff5500">0</span>, <span style="color:#ff5500">0</span>, <span style="color:#ff5500">1</span>)</div><div class="ln" style="top:486px">        oled.show()</div><div class="ln" style="top:508px">        time.sleep(<span style="color:#ff5500">0.5</span>)</div><div class="ln" style="top:530px">    <span style="color:#0000ff">if</span> x == <span style="color:#3535c8">'</span><span style="color:#3535c8">d</span><span style="color:#3535c8">o</span><span style="color:#3535c8">w</span><span style="color:#3535c8">n</span><span style="color:#3535c8">'</span>:</div><div class="ln" style="top:552px">        oled.fill(<span style="color:#ff5500">0</span>)</div><div class="ln" style="top:574px">        oled.DispChar(<span style="color:#2f4f80">str</span>(<span style="color:#3535c8">'</span><span class="cj" style="color:#3535c8">方</span><span class="cj" style="color:#3535c8">向</span><span class="cj" style="color:#3535c8">为</span><span class="cj" style="color:#3535c8">：</span><span class="cj" style="color:#3535c8">下</span><span style="color:#3535c8">'</span>), <span style="color:#ff5500">0</span>, <span style="color:#ff5500">0</span>, <span style="color:#ff5500">1</span>)</div><div class="ln" style="top:596px">        oled.show()</div><div class="ln" style="top:618px">        time.sleep(<span style="color:#ff5500">0.5</span>)</div><div class="ln" style="top:640px">    <span style="color:#0000ff">if</span> x == <span style="color:#3535c8">'</span><span style="color:#3535c8">l</span><span style="color:#3535c8">e</span><span style="color:#3535c8">f</span><span style="color:#3535c8">t</span><span style="color:#3535c8">'</span>:</div><div class="ln" style="top:662px">        oled.fill(<span style="color:#ff5500">0</span>)</div><div class="ln" style="top:684px">        oled.DispChar(<span style="color:#2f4f80">str</span>(<span style="color:#3535c8">'</span><span class="cj" style="color:#3535c8">方</span><span class="cj" style="color:#3535c8">向</span><span class="cj" style="color:#3535c8">为</span><span class="cj" style="color:#3535c8">：</span><span class="cj" style="color:#3535c8">左</span><span style="color:#3535c8">'</span>), <span style="color:#ff5500">0</span>, <span style="color:#ff5500">0</span>, <span style="color:#ff5500">1</span>)</div><div class="ln" style="top:706px">        oled.show()</div><div class="ln" style="top:728px">        time.sleep(<span style="color:#ff5500">0.5</span>)</div><div class="ln" style="top:750px"></div>
</div>
<div id="topbar"></div>
</body></html>
